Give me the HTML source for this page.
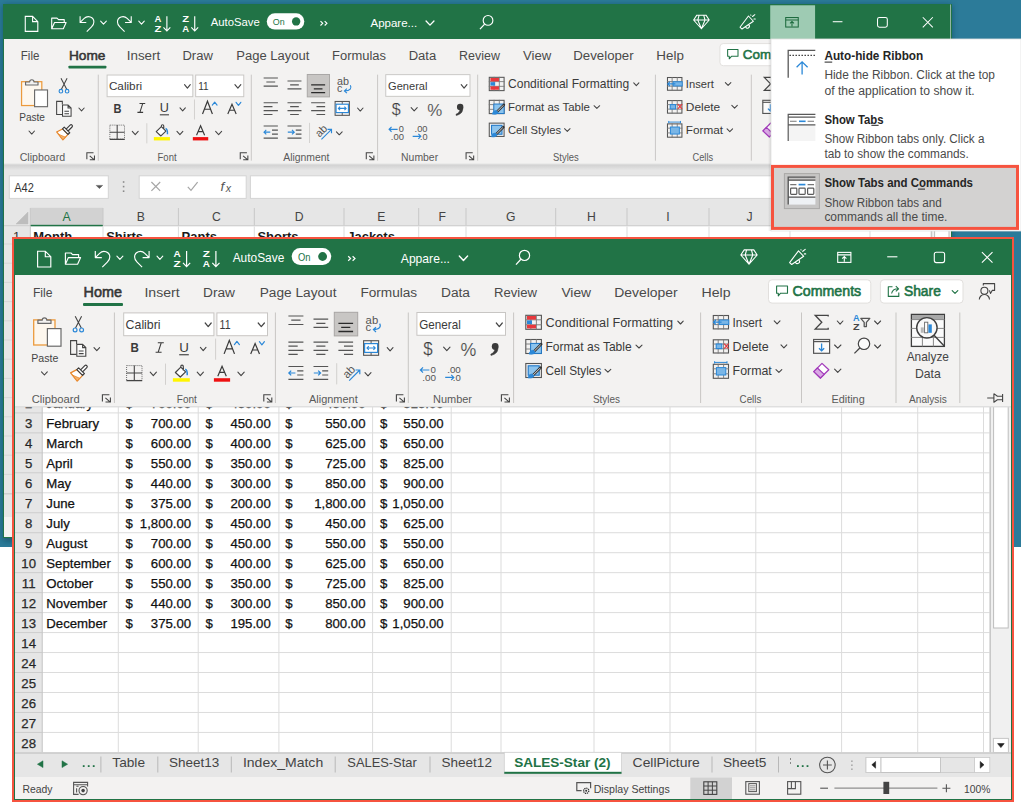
<!DOCTYPE html><html><head><meta charset="utf-8"><title>Excel</title><style>html,body{margin:0;padding:0;width:1021px;height:806px;overflow:hidden;background:#fff}svg{display:block}text{font-family:"Liberation Sans",sans-serif;white-space:pre}</style></head><body><svg width="1021" height="806" viewBox="0 0 1021 806"><defs><clipPath id="topclip"><rect x="3" y="4" width="949" height="534"/></clipPath><clipPath id="deskclip"><rect x="0" y="0" width="1021" height="547"/></clipPath><filter id="blur" x="-5%" y="-5%" width="110%" height="110%"><feGaussianBlur stdDeviation="3"/></filter><clipPath id="botclip"><rect x="15" y="239" width="996" height="560"/></clipPath><linearGradient id="menush" x1="0" y1="0" x2="1" y2="0"><stop offset="0" stop-color="#000" stop-opacity="0"/><stop offset="1" stop-color="#000" stop-opacity="0.12"/></linearGradient><linearGradient id="ribsh" x1="0" y1="0" x2="0" y2="1"><stop offset="0" stop-color="#000" stop-opacity="0.10"/><stop offset="1" stop-color="#000" stop-opacity="0"/></linearGradient></defs><rect x="0.00" y="0.00" width="1021.00" height="547.00" fill="#2c7b99"/><g clip-path="url(#deskclip)"><rect x="3" y="5" width="949" height="536" fill="#0b3a4e" opacity="0.55" filter="url(#blur)"/></g><g clip-path="url(#topclip)"><rect x="3.00" y="4.00" width="949.00" height="534.00" fill="#e6e6e6"/><rect x="3.00" y="164.50" width="949.00" height="374.00" fill="#e6e6e6"/><rect x="3.00" y="164.30" width="949.00" height="6.00" fill="url(#ribsh)"/><rect x="9.30" y="175.80" width="99.00" height="22.60" fill="#ffffff" stroke="#d4d4d4" stroke-width="1"/><text x="14.20" y="191.80" font-size="12.2" fill="#333" textLength="19.60" lengthAdjust="spacingAndGlyphs">A42</text><path d="M96.2,185.4 H102.6 L99.4,188.6 Z" stroke="#555" stroke-width="0.5" fill="#555"/><rect x="122.80" y="181.20" width="1.60" height="1.60" fill="#8a8a8a"/><rect x="122.80" y="185.80" width="1.60" height="1.60" fill="#8a8a8a"/><rect x="122.80" y="190.40" width="1.60" height="1.60" fill="#8a8a8a"/><rect x="139.20" y="175.80" width="107.00" height="22.60" fill="#ffffff" stroke="#d4d4d4" stroke-width="1"/><path d="M151.4,182 L160.2,190.8 M160.2,182 L151.4,190.8" stroke="#a6a6a6" stroke-width="1.2" fill="none"/><path d="M187.8,186.8 L191,190.4 L197.6,182.2" stroke="#a6a6a6" stroke-width="1.2" fill="none"/><text x="220.60" y="191.40" font-size="13.6" fill="#555" font-style="italic" font-family="Liberation Serif">f</text><text x="225.80" y="192.20" font-size="10.6" fill="#555" font-style="italic" font-family="Liberation Serif">x</text><rect x="250.40" y="175.80" width="700.00" height="22.60" fill="#ffffff" stroke="#d4d4d4" stroke-width="1"/><rect x="3.00" y="207.80" width="949.00" height="18.40" fill="#e6e6e6"/><path d="M28,212 V224 H16 Z" stroke="#bdbdbd" stroke-width="0.5" fill="#bdbdbd"/><rect x="30.30" y="207.80" width="72.70" height="18.20" fill="#d2d2d2"/><rect x="30.30" y="224.80" width="72.70" height="2.00" fill="#217346"/><rect x="103.00" y="225.40" width="849.00" height="1.00" fill="#c6c6c6"/><rect x="3.00" y="225.40" width="27.30" height="1.00" fill="#c6c6c6"/><rect x="29.80" y="208.00" width="1.00" height="17.40" fill="#c8c8c8"/><rect x="102.50" y="208.00" width="1.00" height="17.40" fill="#c8c8c8"/><rect x="177.90" y="208.00" width="1.00" height="17.40" fill="#c8c8c8"/><rect x="253.80" y="208.00" width="1.00" height="17.40" fill="#c8c8c8"/><rect x="343.50" y="208.00" width="1.00" height="17.40" fill="#c8c8c8"/><rect x="418.20" y="208.00" width="1.00" height="17.40" fill="#c8c8c8"/><rect x="465.50" y="208.00" width="1.00" height="17.40" fill="#c8c8c8"/><rect x="555.20" y="208.00" width="1.00" height="17.40" fill="#c8c8c8"/><rect x="626.50" y="208.00" width="1.00" height="17.40" fill="#c8c8c8"/><rect x="708.50" y="208.00" width="1.00" height="17.40" fill="#c8c8c8"/><rect x="789.50" y="208.00" width="1.00" height="17.40" fill="#c8c8c8"/><rect x="869.50" y="208.00" width="1.00" height="17.40" fill="#c8c8c8"/><rect x="930.50" y="208.00" width="1.00" height="17.40" fill="#c8c8c8"/><text x="66.65" y="221.20" font-size="12.2" fill="#217346" text-anchor="middle">A</text><text x="140.70" y="221.20" font-size="12.2" fill="#444" text-anchor="middle">B</text><text x="216.35" y="221.20" font-size="12.2" fill="#444" text-anchor="middle">C</text><text x="299.15" y="221.20" font-size="12.2" fill="#444" text-anchor="middle">D</text><text x="381.35" y="221.20" font-size="12.2" fill="#444" text-anchor="middle">E</text><text x="442.35" y="221.20" font-size="12.2" fill="#444" text-anchor="middle">F</text><text x="510.85" y="221.20" font-size="12.2" fill="#444" text-anchor="middle">G</text><text x="591.35" y="221.20" font-size="12.2" fill="#444" text-anchor="middle">H</text><text x="668.00" y="221.20" font-size="12.2" fill="#444" text-anchor="middle">I</text><text x="749.50" y="221.20" font-size="12.2" fill="#444" text-anchor="middle">J</text><text x="830.00" y="221.20" font-size="12.2" fill="#444" text-anchor="middle">K</text><text x="900.50" y="221.20" font-size="12.2" fill="#444" text-anchor="middle">L</text><rect x="30.30" y="226.40" width="921.70" height="312.00" fill="#ffffff"/><rect x="3.00" y="226.40" width="27.30" height="268.00" fill="#e6e6e6"/><rect x="102.50" y="226.40" width="1.00" height="268.00" fill="#dcdcdc"/><rect x="177.90" y="226.40" width="1.00" height="268.00" fill="#dcdcdc"/><rect x="253.80" y="226.40" width="1.00" height="268.00" fill="#dcdcdc"/><rect x="343.50" y="226.40" width="1.00" height="268.00" fill="#dcdcdc"/><rect x="418.20" y="226.40" width="1.00" height="268.00" fill="#dcdcdc"/><rect x="465.50" y="226.40" width="1.00" height="268.00" fill="#dcdcdc"/><rect x="555.20" y="226.40" width="1.00" height="268.00" fill="#dcdcdc"/><rect x="626.50" y="226.40" width="1.00" height="268.00" fill="#dcdcdc"/><rect x="708.50" y="226.40" width="1.00" height="268.00" fill="#dcdcdc"/><rect x="789.50" y="226.40" width="1.00" height="268.00" fill="#dcdcdc"/><rect x="869.50" y="226.40" width="1.00" height="268.00" fill="#dcdcdc"/><rect x="930.50" y="226.40" width="1.00" height="268.00" fill="#dcdcdc"/><rect x="29.80" y="226.40" width="1.00" height="268.00" fill="#c6c6c6"/><rect x="3.00" y="243.50" width="949.00" height="1.00" fill="#d6d6d6"/><rect x="3.00" y="262.70" width="949.00" height="1.00" fill="#d6d6d6"/><rect x="3.00" y="281.90" width="949.00" height="1.00" fill="#d6d6d6"/><rect x="3.00" y="301.10" width="949.00" height="1.00" fill="#d6d6d6"/><rect x="3.00" y="320.30" width="949.00" height="1.00" fill="#d6d6d6"/><rect x="3.00" y="339.50" width="949.00" height="1.00" fill="#d6d6d6"/><rect x="3.00" y="358.70" width="949.00" height="1.00" fill="#d6d6d6"/><rect x="3.00" y="377.90" width="949.00" height="1.00" fill="#d6d6d6"/><rect x="3.00" y="397.10" width="949.00" height="1.00" fill="#d6d6d6"/><rect x="3.00" y="416.30" width="949.00" height="1.00" fill="#d6d6d6"/><rect x="3.00" y="435.50" width="949.00" height="1.00" fill="#d6d6d6"/><rect x="3.00" y="454.70" width="949.00" height="1.00" fill="#d6d6d6"/><rect x="3.00" y="473.90" width="949.00" height="1.00" fill="#d6d6d6"/><rect x="3.00" y="493.10" width="949.00" height="1.00" fill="#d6d6d6"/><rect x="931.00" y="226.40" width="21.00" height="268.00" fill="#f0f0f0"/><rect x="931.00" y="226.40" width="1.20" height="268.00" fill="#c8c8c8"/><rect x="934.60" y="229.00" width="14.40" height="100.00" fill="#ffffff" stroke="#bcbcbc" stroke-width="1"/><text x="16.50" y="241.20" font-size="12.8" fill="#333" text-anchor="middle">1</text><text x="33.20" y="241.40" font-size="13" fill="#1a1a1a" font-weight="bold">Month</text><text x="106.20" y="241.40" font-size="13" fill="#1a1a1a" font-weight="bold">Shirts</text><text x="181.60" y="241.40" font-size="13" fill="#1a1a1a" font-weight="bold">Pants</text><text x="257.40" y="241.40" font-size="13" fill="#1a1a1a" font-weight="bold">Shorts</text><text x="347.20" y="241.40" font-size="13" fill="#1a1a1a" font-weight="bold">Jackets</text><rect x="3.00" y="494.00" width="949.00" height="23.00" fill="#e6e6e6"/><rect x="3.00" y="493.40" width="949.00" height="1.00" fill="#c8c8c8"/><rect x="3.00" y="517.00" width="949.00" height="21.00" fill="#f3f2f1"/><g transform="translate(-10.4664,-222.3528) scale(0.950430)"><rect x="15.00" y="237.00" width="996.00" height="38.00" fill="#217346"/><rect x="15.00" y="275.00" width="996.00" height="132.00" fill="#f3f2f1"/><rect x="821.40" y="239.50" width="47.20" height="35.70" fill="#9ecbb3"/><path d="M37.6,251.2 H45.3 L50.8,256.7 V267 H37.6 Z M45.3,251.2 V256.7 H50.8" stroke="white" stroke-width="1.15" fill="none"/><path d="M65.4,264.2 V253 H71 L72.6,254.6 H78.6 V257.6 M65.4,264.2 L68.4,257.6 H80.6 L77.6,264.2 Z" stroke="white" stroke-width="1.15" fill="none" stroke-linejoin="round"/><path d="M95.3,251 V257.6 H101.8 M95.6,257.3 L99.6,253.3 C103.2,249.7 109.8,251.6 109.8,257 C109.8,259.4 108.7,260.8 107.3,262.2 L102.3,267.2" stroke="white" stroke-width="1.15" fill="none" stroke-linejoin="round"/><path d="M116.9,256.2 L119.9,259.4 L122.9,256.2" stroke="white" stroke-width="1.1" fill="none" stroke-linecap="round" stroke-linejoin="round"/><g transform="translate(244.4,0) scale(-1,1)"><path d="M95.3,251 V257.6 H101.8 M95.6,257.3 L99.6,253.3 C103.2,249.7 109.8,251.6 109.8,257 C109.8,259.4 108.7,260.8 107.3,262.2 L102.3,267.2" stroke="white" stroke-width="1.15" fill="none" stroke-linejoin="round"/></g><path d="M157,256.2 L159.9,259.4 L162.8,256.2" stroke="white" stroke-width="1.1" fill="none" stroke-linecap="round" stroke-linejoin="round"/><text x="173.60" y="257.30" font-size="8.6" fill="white" font-weight="bold" textLength="7.20" lengthAdjust="spacingAndGlyphs">A</text><text x="173.60" y="267.30" font-size="8.6" fill="white" font-weight="bold" textLength="7.20" lengthAdjust="spacingAndGlyphs">Z</text><path d="M186.6,251 V266.6 M183.0,262.8 L186.6,266.6 L190.2,262.8" stroke="white" stroke-width="1.2" fill="none"/><text x="202.80" y="257.30" font-size="8.6" fill="white" font-weight="bold" textLength="7.20" lengthAdjust="spacingAndGlyphs">Z</text><text x="202.80" y="267.30" font-size="8.6" fill="white" font-weight="bold" textLength="7.20" lengthAdjust="spacingAndGlyphs">A</text><path d="M215.9,251 V266.6 M212.3,262.8 L215.9,266.6 L219.5,262.8" stroke="white" stroke-width="1.2" fill="none"/><text x="232.70" y="261.60" font-size="12" fill="white" textLength="51.60" lengthAdjust="spacingAndGlyphs">AutoSave</text><rect x="291.70" y="248.00" width="39.50" height="17.00" fill="white" rx="8.5"/><text x="298.00" y="260.60" font-size="10" fill="#217346" textLength="12.50" lengthAdjust="spacingAndGlyphs">On</text><circle cx="322.6" cy="256.5" r="4.4" fill="#217346"/><path d="M348.2,256.2 L350.6,258.5 L348.2,260.8 M352.6,256.2 L355,258.5 L352.6,260.8" stroke="white" stroke-width="1.2" fill="none"/><text x="400.80" y="262.50" font-size="12.2" fill="white" textLength="49.20" lengthAdjust="spacingAndGlyphs">Appare...</text><path d="M459.3,256 L463.45000000000005,260.4 L467.6,256" stroke="white" stroke-width="1.4" fill="none" stroke-linecap="round" stroke-linejoin="round"/><circle cx="524.5" cy="255.4" r="5.1" stroke="white" stroke-width="1.2" fill="none"/><path d="M516,264.6 L520.9,259.3" stroke="white" stroke-width="1.3" fill="none"/><path d="M744.2,249.9 H753.8 L757.2,255 L749,264.2 L740.8,255 Z M740.8,255 H757.2 M746.6,249.9 L745.2,255 L749,264.2 L752.8,255 L751.4,249.9" stroke="white" stroke-width="1.1" fill="none" stroke-linejoin="round"/><path d="M798.5,250.8 L803.7,256.3 L791.7,264.5 L789.6,262.6 Z M795.6,262.4 A2,2 0 0 0 799.3,260.6 M800.9,249.8 L801.1,249.9 M802.8,251.3 L805.2,249.4 M804.3,253.9 L805.7,253.9" stroke="white" stroke-width="1.1" fill="none" stroke-linejoin="round" stroke-linecap="round"/><rect x="837.70" y="252.40" width="13.20" height="10.00" fill="none" stroke="#1e6b3f" stroke-width="1.1"/><path d="M837.7,254.9 H850.9 M844.3,261.8 V256.6 M842.2,258.6 L844.3,256.5 L846.4,258.6" stroke="#1e6b3f" stroke-width="1.1" fill="none"/><path d="M887.2,256.8 H897.4" stroke="white" stroke-width="1.1" fill="none"/><rect x="934.30" y="252.30" width="10.30" height="10.30" fill="none" stroke="white" stroke-width="1.1" rx="2"/><path d="M981.9,252.1 L992.5,262.7 M992.5,252.1 L981.9,262.7" stroke="white" stroke-width="1.1" fill="none"/><text x="32.90" y="297.10" font-size="13.7" fill="#4a4a4a" textLength="19.60" lengthAdjust="spacingAndGlyphs">File</text><text x="144.40" y="297.10" font-size="13.7" fill="#4a4a4a" textLength="35.20" lengthAdjust="spacingAndGlyphs">Insert</text><text x="203.00" y="297.10" font-size="13.7" fill="#4a4a4a" textLength="32.00" lengthAdjust="spacingAndGlyphs">Draw</text><text x="259.70" y="297.10" font-size="13.7" fill="#4a4a4a" textLength="76.80" lengthAdjust="spacingAndGlyphs">Page Layout</text><text x="360.40" y="297.10" font-size="13.7" fill="#4a4a4a" textLength="56.80" lengthAdjust="spacingAndGlyphs">Formulas</text><text x="441.00" y="297.10" font-size="13.7" fill="#4a4a4a" textLength="29.00" lengthAdjust="spacingAndGlyphs">Data</text><text x="494.00" y="297.10" font-size="13.7" fill="#4a4a4a" textLength="43.00" lengthAdjust="spacingAndGlyphs">Review</text><text x="561.40" y="297.10" font-size="13.7" fill="#4a4a4a" textLength="29.70" lengthAdjust="spacingAndGlyphs">View</text><text x="614.20" y="297.10" font-size="13.7" fill="#4a4a4a" textLength="63.50" lengthAdjust="spacingAndGlyphs">Developer</text><text x="701.60" y="297.10" font-size="13.7" fill="#4a4a4a" textLength="29.00" lengthAdjust="spacingAndGlyphs">Help</text><text x="83.60" y="297.10" font-size="14" fill="#3a3a3a" textLength="38.40" lengthAdjust="spacingAndGlyphs" stroke="#323130" stroke-width="0.55">Home</text><rect x="83.00" y="303.00" width="40.00" height="3.00" fill="#217346" rx="1"/><rect x="768.50" y="279.80" width="102.30" height="23.30" fill="white" stroke="#e1dfdd" stroke-width="1" rx="3.5"/><path d="M776.6,286 H787.5 V293.2 H780.6 L778.3,295.8 V293.2 H776.6 Z" stroke="#217346" stroke-width="1.1" fill="none" stroke-linejoin="round"/><text x="792.60" y="296.30" font-size="14" fill="#217346" textLength="68.60" lengthAdjust="spacingAndGlyphs" stroke="#217346" stroke-width="0.6">Comments</text><rect x="880.40" y="279.80" width="82.60" height="23.30" fill="white" stroke="#e1dfdd" stroke-width="1" rx="3.5"/><path d="M892.5,286.8 H888.3 V296.4 H898.8 V292.5 M891.6,293.5 C892.2,290 894.6,288.8 898.4,288.8 M895.8,286.2 L898.6,288.8 L895.8,291.4" stroke="#217346" stroke-width="1.1" fill="none" stroke-linejoin="round"/><text x="904.00" y="296.10" font-size="14" fill="#217346" textLength="36.80" lengthAdjust="spacingAndGlyphs" stroke="#217346" stroke-width="0.6">Share</text><path d="M952.2,290.6 L955.0,293.4 L957.8,290.6" stroke="#217346" stroke-width="1.2" fill="none" stroke-linecap="round" stroke-linejoin="round"/><path d="M983.3,285.6 V283.6 H994.6 V290.4 H992.2 L990.5,293.4 L989.4,290.4" stroke="#444444" stroke-width="1.1" fill="none" stroke-linejoin="round"/><circle cx="984.4" cy="290.7" r="3.5" stroke="#444444" stroke-width="1.1" fill="none"/><path d="M979.3,299.6 A5.1,5.1 0 0 1 989.5,299.6" stroke="#444444" stroke-width="1.1" fill="none"/><rect x="113.90" y="312.50" width="1.00" height="90.50" fill="#c8c6c4"/><rect x="274.90" y="312.50" width="1.00" height="90.50" fill="#c8c6c4"/><rect x="407.80" y="312.50" width="1.00" height="90.50" fill="#c8c6c4"/><rect x="513.10" y="312.50" width="1.00" height="90.50" fill="#c8c6c4"/><rect x="700.10" y="312.50" width="1.00" height="90.50" fill="#c8c6c4"/><rect x="801.00" y="312.50" width="1.00" height="90.50" fill="#c8c6c4"/><rect x="895.50" y="312.50" width="1.00" height="90.50" fill="#c8c6c4"/><rect x="959.30" y="312.50" width="1.00" height="90.50" fill="#c8c6c4"/><rect x="215.10" y="338.60" width="1.00" height="21.10" fill="#d2d0ce"/><rect x="165.00" y="363.60" width="1.00" height="21.20" fill="#d2d0ce"/><rect x="336.20" y="363.20" width="1.00" height="21.20" fill="#d2d0ce"/><text x="31.70" y="402.90" font-size="11" fill="#5a5a5a" textLength="48.00" lengthAdjust="spacingAndGlyphs">Clipboard</text><text x="176.80" y="402.90" font-size="11" fill="#5a5a5a" textLength="20.00" lengthAdjust="spacingAndGlyphs">Font</text><text x="309.00" y="402.90" font-size="11" fill="#5a5a5a" textLength="48.70" lengthAdjust="spacingAndGlyphs">Alignment</text><text x="433.00" y="402.90" font-size="11" fill="#5a5a5a" textLength="39.00" lengthAdjust="spacingAndGlyphs">Number</text><text x="592.90" y="402.90" font-size="11" fill="#5a5a5a" textLength="27.10" lengthAdjust="spacingAndGlyphs">Styles</text><text x="739.60" y="402.90" font-size="11" fill="#5a5a5a" textLength="21.70" lengthAdjust="spacingAndGlyphs">Cells</text><text x="831.50" y="402.90" font-size="11" fill="#5a5a5a" textLength="33.20" lengthAdjust="spacingAndGlyphs">Editing</text><text x="909.00" y="402.90" font-size="11" fill="#5a5a5a" textLength="37.70" lengthAdjust="spacingAndGlyphs">Analysis</text><path d="M102.4,401.6 V394.7 H109.4" stroke="#444444" stroke-width="1.1" fill="none"/><path d="M105.4,397.9 L110.0,401.9 M105.5,402 H110.4 V397.6" stroke="#444444" stroke-width="1.1" fill="none"/><path d="M263.8,401.6 V394.7 H270.8" stroke="#444444" stroke-width="1.1" fill="none"/><path d="M266.8,397.9 L271.40000000000003,401.9 M266.90000000000003,402 H271.8 V397.6" stroke="#444444" stroke-width="1.1" fill="none"/><path d="M396.4,401.6 V394.7 H403.4" stroke="#444444" stroke-width="1.1" fill="none"/><path d="M399.4,397.9 L404.0,401.9 M399.5,402 H404.4 V397.6" stroke="#444444" stroke-width="1.1" fill="none"/><path d="M501.4,401.6 V394.7 H508.4" stroke="#444444" stroke-width="1.1" fill="none"/><path d="M504.4,397.9 L509.0,401.9 M504.5,402 H509.4 V397.6" stroke="#444444" stroke-width="1.1" fill="none"/><rect x="33.70" y="319.90" width="21.30" height="25.10" fill="#fdf7ee" stroke="#ec9a3c" stroke-width="1.3"/><path d="M37.9,323.4 V320.2 H42.2 A2.3,2.3 0 0 1 46.8,320.2 H51 V323.4 Z" stroke="#6a6a6a" stroke-width="1.2" fill="#f3f2f1" stroke-linejoin="round"/><rect x="47.40" y="328.60" width="13.60" height="17.60" fill="#ffffff" stroke="#6a6a6a" stroke-width="1.2"/><text x="31.20" y="361.60" font-size="11" fill="#454545" textLength="27.10" lengthAdjust="spacingAndGlyphs">Paste</text><path d="M41.5,371.8 L44.4,375 L47.3,371.8" stroke="#444444" stroke-width="1.1" fill="none" stroke-linecap="round" stroke-linejoin="round"/><path d="M75.2,316.2 L81.3,328 M81.6,316.2 L75.5,328" stroke="#444444" stroke-width="1.1" fill="none"/><circle cx="75.1" cy="329.9" r="1.9" stroke="#2b88d8" stroke-width="1.2" fill="none"/><circle cx="81.6" cy="329.9" r="1.9" stroke="#2b88d8" stroke-width="1.2" fill="none"/><path d="M76.6,344 V340.6 H70.6 V354.4 H76.6" stroke="#444444" stroke-width="1.1" fill="none"/><path d="M76.8,344.4 H82.6 L85.8,347.6 V356.2 H76.8 Z M82.6,344.4 V347.6 H85.8 M78.8,351 H83.6 M78.8,353.6 H83.6" stroke="#444444" stroke-width="1.1" fill="#fbfbfb"/><path d="M94,347.6 L96.8,350.6 L99.6,347.6" stroke="#444444" stroke-width="1.1" fill="none" stroke-linecap="round" stroke-linejoin="round"/><path d="M76.8,369.6 L70.6,372.8 L77.2,381 L82.6,375.4 Z" stroke="#e8872a" stroke-width="1.3" fill="#ffffff" stroke-linejoin="round"/><path d="M72.6,375.2 L79.6,378.2 L77.2,381 Z" stroke="#e8872a" stroke-width="0.8" fill="#f3b36e" stroke-linejoin="round"/><path d="M76.8,369.6 L78.6,367.8 L84.4,373.6 L82.6,375.4 Z M80.6,369.8 L84.8,365.6 A1.4,1.4 0 0 1 86.8,367.6 L82.6,371.8" stroke="#3a3a3a" stroke-width="1.2" fill="#ffffff" stroke-linejoin="round"/><rect x="123.70" y="312.90" width="90.20" height="22.80" fill="white" stroke="#c8c6c4" stroke-width="1"/><text x="125.60" y="328.80" font-size="12.2" fill="#3a3a3a" textLength="35.00" lengthAdjust="spacingAndGlyphs">Calibri</text><path d="M205.2,323 L208.2,326.6 L211.2,323" stroke="#444444" stroke-width="1.2" fill="none" stroke-linecap="round" stroke-linejoin="round"/><rect x="216.90" y="312.90" width="50.60" height="22.80" fill="white" stroke="#c8c6c4" stroke-width="1"/><text x="219.60" y="328.80" font-size="12.2" fill="#3a3a3a" textLength="11.00" lengthAdjust="spacingAndGlyphs">11</text><path d="M258.2,323 L261.29999999999995,326.6 L264.4,323" stroke="#444444" stroke-width="1.2" fill="none" stroke-linecap="round" stroke-linejoin="round"/><text x="130.40" y="352.40" font-size="13.6" fill="#3a3a3a" font-weight="bold" textLength="8.40" lengthAdjust="spacingAndGlyphs">B</text><path d="M157.8,342.8 H163.8 M155.6,352.2 H161.6 M161.2,342.8 L158.2,352.2" stroke="#3a3a3a" stroke-width="1.1" fill="none"/><text x="179.20" y="352.20" font-size="13" fill="#3a3a3a" textLength="9.60" lengthAdjust="spacingAndGlyphs">U</text><rect x="179.20" y="354.20" width="9.60" height="1.10" fill="#3a3a3a"/><path d="M200.4,347.4 L203.2,350.6 L206,347.4" stroke="#444444" stroke-width="1.1" fill="none" stroke-linecap="round" stroke-linejoin="round"/><path d="M224.1,353.9 L229.3,340.4 L234.5,353.9 M226.1,348.9 H232.5" stroke="#3a3a3a" stroke-width="1.25" fill="none"/><path d="M234.4,344.6 L236.9,341.4 L239.4,344.6" stroke="#2b88d8" stroke-width="1.2" fill="none" stroke-linecap="round" stroke-linejoin="round"/><path d="M250.7,353.9 L255.1,343.6 L259.5,353.9 M252.4,350 H257.8" stroke="#3a3a3a" stroke-width="1.2" fill="none"/><path d="M259.4,341.6 L261.9,344.8 L264.4,341.6" stroke="#2b88d8" stroke-width="1.2" fill="none" stroke-linecap="round" stroke-linejoin="round"/><path d="M126.6,365.6 H142 V380.4 H126.6 Z" stroke="#6a6a6a" stroke-width="1" fill="none" stroke-dasharray="1,1"/><path d="M134.3,365.6 V380.4 M126.6,373 H142 M126.4,380.6 H142.2" stroke="#444444" stroke-width="1.1" fill="none"/><path d="M150.2,372.2 L153.3,375.6 L156.4,372.2" stroke="#444444" stroke-width="1.1" fill="none" stroke-linecap="round" stroke-linejoin="round"/><path d="M175.4,372.5 L180.8,367.1 L185.6,371.9 L180.3,377 Z M180.8,367.1 V366.4 A1.25,1.25 0 0 1 183.3,366.4 V370.6" stroke="#444444" stroke-width="1.2" fill="white" stroke-linejoin="round"/><path d="M185.2,369.2 C186.8,369.6 187.4,371.4 187.2,375.2" stroke="#2b88d8" stroke-width="1.5" fill="none"/><rect x="172.90" y="378.20" width="16.90" height="3.50" fill="#fff500"/><path d="M197.2,372.2 L200.3,375.6 L203.4,372.2" stroke="#444444" stroke-width="1.1" fill="none" stroke-linecap="round" stroke-linejoin="round"/><path d="M217.8,376.2 L222.05,366.2 L226.3,376.2 M219.4,372.4 H224.7" stroke="#3a3a3a" stroke-width="1.2" fill="none"/><rect x="213.90" y="378.20" width="16.20" height="3.50" fill="#ee1111"/><path d="M237.9,372.2 L241.05,375.6 L244.2,372.2" stroke="#444444" stroke-width="1.1" fill="none" stroke-linecap="round" stroke-linejoin="round"/><path d="M288.40,316 H303.40 M291.25,320.2 H300.55 M288.40,324.5 H303.40" stroke="#555" stroke-width="1.2" fill="none"/><path d="M313.50,319.2 H328.20 M316.29,323.3 H325.41 M313.50,327.4 H328.20" stroke="#555" stroke-width="1.2" fill="none"/><rect x="334.30" y="312.30" width="23.40" height="23.60" fill="#c8c6c4" stroke="#a8a6a4" stroke-width="1"/><path d="M338.40,323.3 H353.10 M341.19,327.4 H350.31 M338.40,331.5 H353.10" stroke="#2a2a2a" stroke-width="1.3" fill="none"/><text x="365.60" y="323.60" font-size="11" fill="#555" textLength="12.60" lengthAdjust="spacingAndGlyphs">ab</text><text x="365.60" y="331.00" font-size="11" fill="#555" textLength="5.60" lengthAdjust="spacingAndGlyphs">c</text><path d="M379.6,323.6 C381.4,326.6 379.6,329.6 373.6,329.6 M376,327.2 L373.4,329.6 L376,332" stroke="#2b88d8" stroke-width="1.2" fill="none"/><path d="M288.40,342.1 H303.40 M288.40,346.2 H297.70 M288.40,350.3 H303.40 M288.40,354.4 H297.70" stroke="#555" stroke-width="1.2" fill="none"/><path d="M313.50,342.1 H328.20 M316.29,346.2 H325.41 M313.50,350.3 H328.20 M316.29,354.4 H325.41" stroke="#555" stroke-width="1.2" fill="none"/><path d="M338.40,342.1 H353.10 M343.99,346.2 H353.10 M338.40,350.3 H353.10 M343.99,354.4 H353.10" stroke="#555" stroke-width="1.2" fill="none"/><rect x="363.60" y="340.70" width="15.00" height="14.60" fill="none" stroke="#555" stroke-width="1.1"/><rect x="364.60" y="343.60" width="13.00" height="8.80" fill="#ffffff" stroke="#2b88d8" stroke-width="1.2"/><path d="M367,348 H375.2 M368.8,346.2 L367,348 L368.8,349.8 M373.4,346.2 L375.2,348 L373.4,349.8" stroke="#2b88d8" stroke-width="1.1" fill="none"/><path d="M371.1,340.7 V343.2 M371.1,352.8 V355.3" stroke="#555" stroke-width="1" fill="none"/><path d="M387.2,347.6 L390.1,350.8 L393,347.6" stroke="#444444" stroke-width="1.1" fill="none" stroke-linecap="round" stroke-linejoin="round"/><path d="M288.4,366.5 H303.4 M297.2,370.9 H303.4 M297.2,375 H303.4 M288.4,379.3 H303.4" stroke="#555" stroke-width="1.2" fill="none"/><path d="M288.8,373 H295.4 M291.2,370.6 L288.8,373 L291.2,375.4" stroke="#2b88d8" stroke-width="1.2" fill="none"/><path d="M313.5,366.5 H328.2 M322.2,370.9 H328.2 M322.2,375 H328.2 M313.5,379.3 H328.2" stroke="#555" stroke-width="1.2" fill="none"/><path d="M313.8,373 H320.6 M318.2,370.6 L320.6,373 L318.2,375.4" stroke="#2b88d8" stroke-width="1.2" fill="none"/><text x="341.60" y="376.40" font-size="11.5" fill="#555" textLength="12.60" lengthAdjust="spacingAndGlyphs" transform="rotate(-45 347.5 371)">ab</text><path d="M349.2,380.6 L359.8,370 M355.6,370 H359.8 V374.2" stroke="#2b88d8" stroke-width="1.2" fill="none"/><path d="M365,372.6 L368.0,375.8 L371,372.6" stroke="#444444" stroke-width="1.1" fill="none" stroke-linecap="round" stroke-linejoin="round"/><rect x="416.90" y="312.50" width="88.60" height="22.80" fill="white" stroke="#c8c6c4" stroke-width="1"/><text x="419.30" y="328.50" font-size="11.9" fill="#3a3a3a" textLength="41.50" lengthAdjust="spacingAndGlyphs">General</text><path d="M496.3,323 L499.3,326.6 L502.3,323" stroke="#444444" stroke-width="1.2" fill="none" stroke-linecap="round" stroke-linejoin="round"/><text x="423.20" y="355.20" font-size="17.5" fill="#3a3a3a" textLength="9.40" lengthAdjust="spacingAndGlyphs" stroke="#f3f2f1" stroke-width="0.2">$</text><path d="M443.6,347.2 L446.8,350.6 L450,347.2" stroke="#444444" stroke-width="1.1" fill="none" stroke-linecap="round" stroke-linejoin="round"/><text x="460.60" y="356.40" font-size="17.5" fill="#3a3a3a" textLength="15.80" lengthAdjust="spacingAndGlyphs" stroke="#f3f2f1" stroke-width="0.2">%</text><circle cx="495.2" cy="346.4" r="3.4" fill="#3a3a3a"/><path d="M497.6,347 C498.6,351.4 496,354.2 491,355.4 L490.8,354.2 C493.6,353 495,351.2 494.8,348.6 Z" stroke="#3a3a3a" stroke-width="0.6" fill="#3a3a3a"/><text x="430.50" y="372.50" font-size="8.6" fill="#555" textLength="5.40" lengthAdjust="spacingAndGlyphs">0</text><text x="422.20" y="380.90" font-size="8.6" fill="#555" textLength="13.80" lengthAdjust="spacingAndGlyphs">.00</text><path d="M420.4,370 H429.4 M423,367.4 L420.4,370 L423,372.6" stroke="#2b88d8" stroke-width="1.2" fill="none"/><text x="447.20" y="372.50" font-size="8.6" fill="#555" textLength="13.60" lengthAdjust="spacingAndGlyphs">.00</text><text x="452.80" y="380.90" font-size="8.6" fill="#555" textLength="8.00" lengthAdjust="spacingAndGlyphs">.0</text><path d="M445.2,377.4 H453.8 M451.2,374.8 L453.8,377.4 L451.2,380" stroke="#2b88d8" stroke-width="1.2" fill="none"/><rect x="525.80" y="315.30" width="15.60" height="14.00" fill="none" stroke="#555" stroke-width="1.1"/><path d="M530.83,314.8 V329.8 M536.37,314.8 V329.8 M525.3,319.80 H541.9 M525.3,324.80 H541.9" stroke="#777" stroke-width="0.9" fill="none"/><rect x="527.00" y="316.00" width="9.00" height="3.60" fill="#e8383d"/><rect x="527.00" y="320.40" width="5.00" height="3.60" fill="#2b88d8"/><rect x="527.00" y="324.80" width="9.00" height="3.60" fill="#e8383d"/><text x="545.50" y="326.90" font-size="12.5" fill="#3a3a3a" textLength="127.60" lengthAdjust="spacingAndGlyphs">Conditional Formatting</text><path d="M677.8,321.2 L680.5,324 L683.2,321.2" stroke="#444444" stroke-width="1.1" fill="none" stroke-linecap="round" stroke-linejoin="round"/><rect x="525.80" y="339.50" width="15.60" height="14.00" fill="none" stroke="#555" stroke-width="1.1"/><path d="M530.83,339 V354 M536.37,339 V354 M525.3,344.00 H541.9 M525.3,349.00 H541.9" stroke="#777" stroke-width="0.9" fill="none"/><rect x="530.60" y="343.40" width="10.80" height="10.00" fill="#8cc4ee" stroke="#1f78c8" stroke-width="1"/><path d="M533.6,351.8 L541.2,344.2" stroke="#333" stroke-width="2.6" fill="none" stroke-linecap="round"/><path d="M534.2,351.2 L540.6,344.8" stroke="#ffffff" stroke-width="0.8" fill="none"/><path d="M529,354 C529.6,351.6 531,350.4 533.2,350.2 L535,352 C534.6,354 532.4,354.4 529,354 Z" stroke="#2b88d8" stroke-width="0.8" fill="#2b88d8"/><text x="545.50" y="351.10" font-size="12.2" fill="#3a3a3a" textLength="86.20" lengthAdjust="spacingAndGlyphs">Format as Table</text><path d="M636,345.2 L639.0,348 L642,345.2" stroke="#444444" stroke-width="1.1" fill="none" stroke-linecap="round" stroke-linejoin="round"/><rect x="525.80" y="363.50" width="15.60" height="14.00" fill="none" stroke="#555" stroke-width="1.1"/><rect x="528.20" y="365.80" width="11.00" height="9.40" fill="#8cc4ee" stroke="#1f78c8" stroke-width="1.1"/><path d="M532.6,375.6 L540.6,367.6" stroke="#333" stroke-width="2.6" fill="none" stroke-linecap="round"/><path d="M533.2,375 L540,368.2" stroke="#ffffff" stroke-width="0.8" fill="none"/><path d="M528,377.8 C528.6,375.4 530,374.2 532.2,374 L534,375.8 C533.6,377.8 531.4,378.2 528,377.8 Z" stroke="#2b88d8" stroke-width="0.8" fill="#2b88d8"/><text x="545.50" y="375.20" font-size="12" fill="#3a3a3a" textLength="55.80" lengthAdjust="spacingAndGlyphs">Cell Styles</text><path d="M605,369.4 L607.9,372.2 L610.8,369.4" stroke="#444444" stroke-width="1.1" fill="none" stroke-linecap="round" stroke-linejoin="round"/><rect x="713.30" y="315.50" width="15.20" height="13.40" fill="none" stroke="#555" stroke-width="1.1"/><path d="M718.20,315 V329.4 M723.60,315 V329.4 M712.8,319.80 H729.0 M712.8,324.60 H729.0" stroke="#777" stroke-width="0.9" fill="none"/><rect x="719.20" y="320.00" width="9.60" height="4.40" fill="#7ab6e6" stroke="#2b88d8" stroke-width="1"/><path d="M713.6,322.2 H721.6 M716,319.8 L713.6,322.2 L716,324.6" stroke="#2b88d8" stroke-width="1.3" fill="none"/><text x="732.60" y="326.90" font-size="12" fill="#3a3a3a" textLength="29.40" lengthAdjust="spacingAndGlyphs">Insert</text><path d="M774.2,320.8 L777.1,323.8 L780,320.8" stroke="#444444" stroke-width="1.1" fill="none" stroke-linecap="round" stroke-linejoin="round"/><rect x="713.30" y="339.80" width="15.20" height="13.20" fill="none" stroke="#555" stroke-width="1.1"/><path d="M718.20,339.3 V353.5 M723.60,339.3 V353.5 M712.8,344.03 H729.0 M712.8,348.77 H729.0" stroke="#777" stroke-width="0.9" fill="none"/><rect x="716.20" y="344.00" width="5.60" height="4.60" fill="#7ab6e6" stroke="#2b88d8" stroke-width="1.1"/><path d="M724.2,343.6 L728.6,348.6 M728.6,343.6 L724.2,348.6" stroke="#e8383d" stroke-width="1.2" fill="none"/><text x="732.60" y="350.90" font-size="12.4" fill="#3a3a3a" textLength="36.20" lengthAdjust="spacingAndGlyphs">Delete</text><path d="M781,344.8 L783.9,347.8 L786.8,344.8" stroke="#444444" stroke-width="1.1" fill="none" stroke-linecap="round" stroke-linejoin="round"/><rect x="713.30" y="364.30" width="15.20" height="14.00" fill="none" stroke="#555" stroke-width="1.1"/><path d="M718.20,363.8 V378.8 M723.60,363.8 V378.8 M712.8,368.80 H729.0 M712.8,373.80 H729.0" stroke="#777" stroke-width="0.9" fill="none"/><rect x="716.40" y="367.60" width="9.40" height="7.40" fill="#7ab6e6" stroke="#2b88d8" stroke-width="1"/><path d="M714.6,362.4 H727 M714.6,361.2 V363.6 M727,361.2 V363.6" stroke="#2b88d8" stroke-width="1" fill="none"/><text x="732.60" y="375.20" font-size="12.4" fill="#3a3a3a" textLength="39.20" lengthAdjust="spacingAndGlyphs">Format</text><path d="M776,369.6 L778.9,372.4 L781.8,369.6" stroke="#444444" stroke-width="1.1" fill="none" stroke-linecap="round" stroke-linejoin="round"/><path d="M828.2,316.6 V315.3 H815.2 L821.8,322.2 L815.2,329.1 H828.2 V327.8" stroke="#444" stroke-width="1.3" fill="none" stroke-linejoin="miter"/><path d="M837.3,321 L840.0999999999999,324.1 L842.9,321" stroke="#444444" stroke-width="1.1" fill="none" stroke-linecap="round" stroke-linejoin="round"/><text x="853.10" y="320.80" font-size="8.6" fill="#2b88d8" font-weight="bold" textLength="6.60" lengthAdjust="spacingAndGlyphs">A</text><text x="853.10" y="330.30" font-size="8.6" fill="#444" font-weight="bold" textLength="6.60" lengthAdjust="spacingAndGlyphs">Z</text><path d="M860.8,318.4 H869.8 L866.4,322.4 V326.6 H864.2 V322.4 Z" stroke="#555" stroke-width="1.3" fill="#f3f2f1" stroke-linejoin="round"/><path d="M874.6,321 L877.6,324.1 L880.6,321" stroke="#444444" stroke-width="1.1" fill="none" stroke-linecap="round" stroke-linejoin="round"/><rect x="813.60" y="339.50" width="16.00" height="13.80" fill="#fbfbfb" stroke="#555" stroke-width="1.2"/><path d="M813.6,341.6 H829.6" stroke="#555" stroke-width="1.2" fill="none"/><path d="M821.6,343.6 V350.6 M819,348.2 L821.6,350.8 L824.2,348.2" stroke="#2b88d8" stroke-width="1.3" fill="none"/><path d="M834.6,345 L837.75,348.2 L840.9,345" stroke="#444444" stroke-width="1.1" fill="none" stroke-linecap="round" stroke-linejoin="round"/><circle cx="864" cy="343.8" r="5.7" stroke="#444" stroke-width="1.2" fill="#fbfbfb"/><path d="M854.4,353.4 L860.1,347.8" stroke="#444" stroke-width="1.3" fill="none"/><path d="M874.6,345 L877.6,348.2 L880.6,345" stroke="#444444" stroke-width="1.1" fill="none" stroke-linecap="round" stroke-linejoin="round"/><path d="M813.8,371.6 L822,363.4 L828.8,369.8 L820.4,378 Z" stroke="#a23bba" stroke-width="1.3" fill="#ffffff" stroke-linejoin="round"/><path d="M813.8,371.6 L817.4,368 L824.2,374.4 L820.4,378 Z" stroke="#a23bba" stroke-width="1.2" fill="#d9a8e4" stroke-linejoin="round"/><path d="M834.6,369.2 L837.75,372.4 L840.9,369.2" stroke="#444444" stroke-width="1.1" fill="none" stroke-linecap="round" stroke-linejoin="round"/><rect x="911.40" y="314.40" width="33.00" height="32.00" fill="#fbfbfb" stroke="#3f3f3f" stroke-width="1.3"/><rect x="912.00" y="315.00" width="31.80" height="4.40" fill="#a8a8a8"/><path d="M911.4,319.6 H944.4 M922.4,319.6 V346.4 M933.4,319.6 V346.4 M911.4,328.4 H944.4 M911.4,337.4 H944.4" stroke="#888" stroke-width="1" fill="none"/><circle cx="926.9" cy="327.8" r="10.2" stroke="#3f3f3f" stroke-width="1.4" fill="#f8f8f8"/><rect x="920.80" y="327.40" width="3.00" height="5.40" fill="#b8b8b8"/><rect x="924.60" y="322.20" width="3.20" height="10.60" fill="#ffffff" stroke="#666" stroke-width="0.9"/><rect x="928.40" y="324.40" width="3.40" height="8.40" fill="#2b88d8"/><path d="M933.8,335 L944.2,346" stroke="#3f3f3f" stroke-width="1.4" fill="none"/><text x="906.70" y="361.40" font-size="12.2" fill="#454545" textLength="42.30" lengthAdjust="spacingAndGlyphs">Analyze</text><text x="915.00" y="378.00" font-size="12.2" fill="#454545" textLength="25.80" lengthAdjust="spacingAndGlyphs">Data</text><path d="M987.2,398 H993.6 M993.9,393.6 V402.2 L997.4,399.8 H1002.6 V402 M993.9,393.6 L997.4,396.2 H1002.6 V394 M1002.6,394 V402" stroke="#444444" stroke-width="1.1" fill="none" stroke-linejoin="round"/><rect x="15.00" y="406.20" width="996.00" height="1.20" fill="#dadada"/></g><rect x="3.50" y="4.00" width="948.00" height="533.50" fill="none" stroke="#217346" stroke-width="1"/></g><rect x="768.00" y="39.00" width="3.00" height="192.00" fill="url(#menush)"/><rect x="771.00" y="39.00" width="250.00" height="192.00" fill="#ffffff"/><rect x="771.00" y="39.00" width="250.00" height="192.00" fill="none" stroke="#e0e0e0" stroke-width="0.8"/><path d="M788.2,77.7 V50.45 H815.3" stroke="#595959" stroke-width="1.3" fill="none"/><path d="M789.5,55.4 H815.3" stroke="#333" stroke-width="1.1" fill="none" stroke-dasharray="1.4,1.6"/><path d="M802.1,74.5 V62.2 M796.6,67.2 L802.1,61.8 L807.6,67.2" stroke="#2b88d8" stroke-width="1.3" fill="none"/><text x="824.40" y="60.30" font-size="11.9" fill="#252525" font-weight="bold" textLength="98.90" lengthAdjust="spacingAndGlyphs">Auto-hide Ribbon</text><rect x="824.60" y="61.60" width="7.60" height="1.00" fill="#252525"/><text x="824.40" y="79.40" font-size="12" fill="#4a4a4a" textLength="170.60" lengthAdjust="spacingAndGlyphs">Hide the Ribbon. Click at the top</text><text x="824.40" y="94.80" font-size="12" fill="#4a4a4a" textLength="150.30" lengthAdjust="spacingAndGlyphs">of the application to show it.</text><rect x="789.00" y="125.00" width="26.40" height="16.00" fill="#f4f4f4"/><path d="M788.2,141 V114.4 H815.4 M788.2,117.2 H815.4 M788.2,124.8 H815.4" stroke="#595959" stroke-width="1.2" fill="none"/><path d="M790,121.3 H796.6 M807.6,121.3 H814" stroke="#777" stroke-width="1.1" fill="none"/><path d="M799,121.3 H805.6" stroke="#2b88d8" stroke-width="1.6" fill="none"/><text x="824.40" y="123.50" font-size="11.9" fill="#252525" font-weight="bold" textLength="59.20" lengthAdjust="spacingAndGlyphs">Show Tabs</text><rect x="871.40" y="124.80" width="7.20" height="1.00" fill="#252525"/><text x="824.40" y="143.00" font-size="12" fill="#4a4a4a" textLength="160.00" lengthAdjust="spacingAndGlyphs">Show Ribbon tabs only. Click a</text><text x="824.40" y="158.20" font-size="12" fill="#4a4a4a" textLength="144.40" lengthAdjust="spacingAndGlyphs">tab to show the commands.</text><rect x="772.50" y="166.40" width="245.00" height="62.00" fill="#d3d2d1" stroke="#f6533f" stroke-width="3"/><rect x="784.40" y="173.60" width="35.00" height="35.00" fill="#c6c5c4" stroke="#a9a8a7" stroke-width="1"/><rect x="788.80" y="180.60" width="26.60" height="17.00" fill="#ffffff"/><rect x="788.80" y="197.60" width="26.60" height="7.00" fill="#eef1f4"/><path d="M788.2,204.4 V177.2 H815.4 M788.2,180.1 H815.4 M788.2,197.2 H815.4" stroke="#555" stroke-width="1.3" fill="none"/><path d="M790.2,184.6 H796.4 M807.6,184.6 H814" stroke="#777" stroke-width="1.2" fill="none"/><path d="M798.6,184.6 H805.4" stroke="#2b88d8" stroke-width="1.7" fill="none"/><rect x="790.60" y="188.20" width="6.20" height="6.20" fill="#ffffff" stroke="#5a5a5a" stroke-width="1.2" rx="0.8"/><rect x="799.00" y="188.20" width="6.20" height="6.20" fill="#ffffff" stroke="#5a5a5a" stroke-width="1.2" rx="0.8"/><rect x="807.60" y="188.20" width="6.20" height="6.20" fill="#ffffff" stroke="#5a5a5a" stroke-width="1.2" rx="0.8"/><text x="824.40" y="187.20" font-size="11.9" fill="#252525" font-weight="bold" textLength="148.60" lengthAdjust="spacingAndGlyphs">Show Tabs and Commands</text><rect x="918.00" y="188.60" width="7.00" height="1.00" fill="#252525"/><text x="824.40" y="206.50" font-size="12" fill="#4a4a4a" textLength="117.30" lengthAdjust="spacingAndGlyphs">Show Ribbon tabs and</text><text x="824.40" y="221.20" font-size="12" fill="#4a4a4a" textLength="123.00" lengthAdjust="spacingAndGlyphs">commands all the time.</text><rect x="12.00" y="237.00" width="1002.00" height="565.00" fill="#f6533f"/><rect x="14.00" y="239.00" width="998.00" height="561.00" fill="#217346"/><g clip-path="url(#botclip)"><rect x="15.00" y="239.00" width="996.00" height="560.00" fill="#ffffff"/><rect x="15.00" y="400.00" width="996.00" height="400.00" fill="#ffffff"/><rect x="15.00" y="400.00" width="27.60" height="352.50" fill="#e6e6e6"/><rect x="42.20" y="412.40" width="947.80" height="1.00" fill="#dcdcdc"/><rect x="15.00" y="412.40" width="27.60" height="1.00" fill="#cdcdcd"/><rect x="42.20" y="432.37" width="947.80" height="1.00" fill="#dcdcdc"/><rect x="15.00" y="432.37" width="27.60" height="1.00" fill="#cdcdcd"/><rect x="42.20" y="452.34" width="947.80" height="1.00" fill="#dcdcdc"/><rect x="15.00" y="452.34" width="27.60" height="1.00" fill="#cdcdcd"/><rect x="42.20" y="472.31" width="947.80" height="1.00" fill="#dcdcdc"/><rect x="15.00" y="472.31" width="27.60" height="1.00" fill="#cdcdcd"/><rect x="42.20" y="492.28" width="947.80" height="1.00" fill="#dcdcdc"/><rect x="15.00" y="492.28" width="27.60" height="1.00" fill="#cdcdcd"/><rect x="42.20" y="512.25" width="947.80" height="1.00" fill="#dcdcdc"/><rect x="15.00" y="512.25" width="27.60" height="1.00" fill="#cdcdcd"/><rect x="42.20" y="532.22" width="947.80" height="1.00" fill="#dcdcdc"/><rect x="15.00" y="532.22" width="27.60" height="1.00" fill="#cdcdcd"/><rect x="42.20" y="552.19" width="947.80" height="1.00" fill="#dcdcdc"/><rect x="15.00" y="552.19" width="27.60" height="1.00" fill="#cdcdcd"/><rect x="42.20" y="572.16" width="947.80" height="1.00" fill="#dcdcdc"/><rect x="15.00" y="572.16" width="27.60" height="1.00" fill="#cdcdcd"/><rect x="42.20" y="592.13" width="947.80" height="1.00" fill="#dcdcdc"/><rect x="15.00" y="592.13" width="27.60" height="1.00" fill="#cdcdcd"/><rect x="42.20" y="612.10" width="947.80" height="1.00" fill="#dcdcdc"/><rect x="15.00" y="612.10" width="27.60" height="1.00" fill="#cdcdcd"/><rect x="42.20" y="632.07" width="947.80" height="1.00" fill="#dcdcdc"/><rect x="15.00" y="632.07" width="27.60" height="1.00" fill="#cdcdcd"/><rect x="42.20" y="652.04" width="947.80" height="1.00" fill="#dcdcdc"/><rect x="15.00" y="652.04" width="27.60" height="1.00" fill="#cdcdcd"/><rect x="42.20" y="672.01" width="947.80" height="1.00" fill="#dcdcdc"/><rect x="15.00" y="672.01" width="27.60" height="1.00" fill="#cdcdcd"/><rect x="42.20" y="691.98" width="947.80" height="1.00" fill="#dcdcdc"/><rect x="15.00" y="691.98" width="27.60" height="1.00" fill="#cdcdcd"/><rect x="42.20" y="711.95" width="947.80" height="1.00" fill="#dcdcdc"/><rect x="15.00" y="711.95" width="27.60" height="1.00" fill="#cdcdcd"/><rect x="42.20" y="731.92" width="947.80" height="1.00" fill="#dcdcdc"/><rect x="15.00" y="731.92" width="27.60" height="1.00" fill="#cdcdcd"/><rect x="117.80" y="400.00" width="1.00" height="352.50" fill="#dcdcdc"/><rect x="197.70" y="400.00" width="1.00" height="352.50" fill="#dcdcdc"/><rect x="278.40" y="400.00" width="1.00" height="352.50" fill="#dcdcdc"/><rect x="372.10" y="400.00" width="1.00" height="352.50" fill="#dcdcdc"/><rect x="450.70" y="400.00" width="1.00" height="352.50" fill="#dcdcdc"/><rect x="500.50" y="400.00" width="1.00" height="352.50" fill="#dcdcdc"/><rect x="593.50" y="400.00" width="1.00" height="352.50" fill="#dcdcdc"/><rect x="669.50" y="400.00" width="1.00" height="352.50" fill="#dcdcdc"/><rect x="755.30" y="400.00" width="1.00" height="352.50" fill="#dcdcdc"/><rect x="841.10" y="400.00" width="1.00" height="352.50" fill="#dcdcdc"/><rect x="917.20" y="400.00" width="1.00" height="352.50" fill="#dcdcdc"/><rect x="983.00" y="400.00" width="1.00" height="352.50" fill="#dcdcdc"/><rect x="41.70" y="400.00" width="1.00" height="352.50" fill="#c6c6c6"/><text x="28.70" y="408.40" font-size="13.2" fill="#333" text-anchor="middle" stroke="#111" stroke-width="0.25">2</text><text x="46.30" y="408.40" font-size="13.2" fill="#111" stroke="#111" stroke-width="0.25">January</text><text x="125.40" y="408.40" font-size="13.2" fill="#111" stroke="#111" stroke-width="0.25">$</text><text x="191.20" y="408.40" font-size="13.2" fill="#111" text-anchor="end" stroke="#111" stroke-width="0.25">700.00</text><text x="205.50" y="408.40" font-size="13.2" fill="#111" stroke="#111" stroke-width="0.25">$</text><text x="270.80" y="408.40" font-size="13.2" fill="#111" text-anchor="end" stroke="#111" stroke-width="0.25">450.00</text><text x="285.30" y="408.40" font-size="13.2" fill="#111" stroke="#111" stroke-width="0.25">$</text><text x="365.50" y="408.40" font-size="13.2" fill="#111" text-anchor="end" stroke="#111" stroke-width="0.25">450.00</text><text x="380.00" y="408.40" font-size="13.2" fill="#111" stroke="#111" stroke-width="0.25">$</text><text x="443.70" y="408.40" font-size="13.2" fill="#111" text-anchor="end" stroke="#111" stroke-width="0.25">525.00</text><text x="28.70" y="428.37" font-size="13.2" fill="#333" text-anchor="middle" stroke="#111" stroke-width="0.25">3</text><text x="46.30" y="428.37" font-size="13.2" fill="#111" stroke="#111" stroke-width="0.25">February</text><text x="125.40" y="428.37" font-size="13.2" fill="#111" stroke="#111" stroke-width="0.25">$</text><text x="191.20" y="428.37" font-size="13.2" fill="#111" text-anchor="end" stroke="#111" stroke-width="0.25">700.00</text><text x="205.50" y="428.37" font-size="13.2" fill="#111" stroke="#111" stroke-width="0.25">$</text><text x="270.80" y="428.37" font-size="13.2" fill="#111" text-anchor="end" stroke="#111" stroke-width="0.25">450.00</text><text x="285.30" y="428.37" font-size="13.2" fill="#111" stroke="#111" stroke-width="0.25">$</text><text x="365.50" y="428.37" font-size="13.2" fill="#111" text-anchor="end" stroke="#111" stroke-width="0.25">550.00</text><text x="380.00" y="428.37" font-size="13.2" fill="#111" stroke="#111" stroke-width="0.25">$</text><text x="443.70" y="428.37" font-size="13.2" fill="#111" text-anchor="end" stroke="#111" stroke-width="0.25">550.00</text><text x="28.70" y="448.34" font-size="13.2" fill="#333" text-anchor="middle" stroke="#111" stroke-width="0.25">4</text><text x="46.30" y="448.34" font-size="13.2" fill="#111" stroke="#111" stroke-width="0.25">March</text><text x="125.40" y="448.34" font-size="13.2" fill="#111" stroke="#111" stroke-width="0.25">$</text><text x="191.20" y="448.34" font-size="13.2" fill="#111" text-anchor="end" stroke="#111" stroke-width="0.25">600.00</text><text x="205.50" y="448.34" font-size="13.2" fill="#111" stroke="#111" stroke-width="0.25">$</text><text x="270.80" y="448.34" font-size="13.2" fill="#111" text-anchor="end" stroke="#111" stroke-width="0.25">400.00</text><text x="285.30" y="448.34" font-size="13.2" fill="#111" stroke="#111" stroke-width="0.25">$</text><text x="365.50" y="448.34" font-size="13.2" fill="#111" text-anchor="end" stroke="#111" stroke-width="0.25">625.00</text><text x="380.00" y="448.34" font-size="13.2" fill="#111" stroke="#111" stroke-width="0.25">$</text><text x="443.70" y="448.34" font-size="13.2" fill="#111" text-anchor="end" stroke="#111" stroke-width="0.25">650.00</text><text x="28.70" y="468.31" font-size="13.2" fill="#333" text-anchor="middle" stroke="#111" stroke-width="0.25">5</text><text x="46.30" y="468.31" font-size="13.2" fill="#111" stroke="#111" stroke-width="0.25">April</text><text x="125.40" y="468.31" font-size="13.2" fill="#111" stroke="#111" stroke-width="0.25">$</text><text x="191.20" y="468.31" font-size="13.2" fill="#111" text-anchor="end" stroke="#111" stroke-width="0.25">550.00</text><text x="205.50" y="468.31" font-size="13.2" fill="#111" stroke="#111" stroke-width="0.25">$</text><text x="270.80" y="468.31" font-size="13.2" fill="#111" text-anchor="end" stroke="#111" stroke-width="0.25">350.00</text><text x="285.30" y="468.31" font-size="13.2" fill="#111" stroke="#111" stroke-width="0.25">$</text><text x="365.50" y="468.31" font-size="13.2" fill="#111" text-anchor="end" stroke="#111" stroke-width="0.25">725.00</text><text x="380.00" y="468.31" font-size="13.2" fill="#111" stroke="#111" stroke-width="0.25">$</text><text x="443.70" y="468.31" font-size="13.2" fill="#111" text-anchor="end" stroke="#111" stroke-width="0.25">825.00</text><text x="28.70" y="488.28" font-size="13.2" fill="#333" text-anchor="middle" stroke="#111" stroke-width="0.25">6</text><text x="46.30" y="488.28" font-size="13.2" fill="#111" stroke="#111" stroke-width="0.25">May</text><text x="125.40" y="488.28" font-size="13.2" fill="#111" stroke="#111" stroke-width="0.25">$</text><text x="191.20" y="488.28" font-size="13.2" fill="#111" text-anchor="end" stroke="#111" stroke-width="0.25">440.00</text><text x="205.50" y="488.28" font-size="13.2" fill="#111" stroke="#111" stroke-width="0.25">$</text><text x="270.80" y="488.28" font-size="13.2" fill="#111" text-anchor="end" stroke="#111" stroke-width="0.25">300.00</text><text x="285.30" y="488.28" font-size="13.2" fill="#111" stroke="#111" stroke-width="0.25">$</text><text x="365.50" y="488.28" font-size="13.2" fill="#111" text-anchor="end" stroke="#111" stroke-width="0.25">850.00</text><text x="380.00" y="488.28" font-size="13.2" fill="#111" stroke="#111" stroke-width="0.25">$</text><text x="443.70" y="488.28" font-size="13.2" fill="#111" text-anchor="end" stroke="#111" stroke-width="0.25">900.00</text><text x="28.70" y="508.25" font-size="13.2" fill="#333" text-anchor="middle" stroke="#111" stroke-width="0.25">7</text><text x="46.30" y="508.25" font-size="13.2" fill="#111" stroke="#111" stroke-width="0.25">June</text><text x="125.40" y="508.25" font-size="13.2" fill="#111" stroke="#111" stroke-width="0.25">$</text><text x="191.20" y="508.25" font-size="13.2" fill="#111" text-anchor="end" stroke="#111" stroke-width="0.25">375.00</text><text x="205.50" y="508.25" font-size="13.2" fill="#111" stroke="#111" stroke-width="0.25">$</text><text x="270.80" y="508.25" font-size="13.2" fill="#111" text-anchor="end" stroke="#111" stroke-width="0.25">200.00</text><text x="285.30" y="508.25" font-size="13.2" fill="#111" stroke="#111" stroke-width="0.25">$</text><text x="365.50" y="508.25" font-size="13.2" fill="#111" text-anchor="end" stroke="#111" stroke-width="0.25">1,800.00</text><text x="380.00" y="508.25" font-size="13.2" fill="#111" stroke="#111" stroke-width="0.25">$</text><text x="443.70" y="508.25" font-size="13.2" fill="#111" text-anchor="end" stroke="#111" stroke-width="0.25">1,050.00</text><text x="28.70" y="528.22" font-size="13.2" fill="#333" text-anchor="middle" stroke="#111" stroke-width="0.25">8</text><text x="46.30" y="528.22" font-size="13.2" fill="#111" stroke="#111" stroke-width="0.25">July</text><text x="125.40" y="528.22" font-size="13.2" fill="#111" stroke="#111" stroke-width="0.25">$</text><text x="191.20" y="528.22" font-size="13.2" fill="#111" text-anchor="end" stroke="#111" stroke-width="0.25">1,800.00</text><text x="205.50" y="528.22" font-size="13.2" fill="#111" stroke="#111" stroke-width="0.25">$</text><text x="270.80" y="528.22" font-size="13.2" fill="#111" text-anchor="end" stroke="#111" stroke-width="0.25">450.00</text><text x="285.30" y="528.22" font-size="13.2" fill="#111" stroke="#111" stroke-width="0.25">$</text><text x="365.50" y="528.22" font-size="13.2" fill="#111" text-anchor="end" stroke="#111" stroke-width="0.25">450.00</text><text x="380.00" y="528.22" font-size="13.2" fill="#111" stroke="#111" stroke-width="0.25">$</text><text x="443.70" y="528.22" font-size="13.2" fill="#111" text-anchor="end" stroke="#111" stroke-width="0.25">625.00</text><text x="28.70" y="548.19" font-size="13.2" fill="#333" text-anchor="middle" stroke="#111" stroke-width="0.25">9</text><text x="46.30" y="548.19" font-size="13.2" fill="#111" stroke="#111" stroke-width="0.25">August</text><text x="125.40" y="548.19" font-size="13.2" fill="#111" stroke="#111" stroke-width="0.25">$</text><text x="191.20" y="548.19" font-size="13.2" fill="#111" text-anchor="end" stroke="#111" stroke-width="0.25">700.00</text><text x="205.50" y="548.19" font-size="13.2" fill="#111" stroke="#111" stroke-width="0.25">$</text><text x="270.80" y="548.19" font-size="13.2" fill="#111" text-anchor="end" stroke="#111" stroke-width="0.25">450.00</text><text x="285.30" y="548.19" font-size="13.2" fill="#111" stroke="#111" stroke-width="0.25">$</text><text x="365.50" y="548.19" font-size="13.2" fill="#111" text-anchor="end" stroke="#111" stroke-width="0.25">550.00</text><text x="380.00" y="548.19" font-size="13.2" fill="#111" stroke="#111" stroke-width="0.25">$</text><text x="443.70" y="548.19" font-size="13.2" fill="#111" text-anchor="end" stroke="#111" stroke-width="0.25">550.00</text><text x="28.70" y="568.16" font-size="13.2" fill="#333" text-anchor="middle" stroke="#111" stroke-width="0.25">10</text><text x="46.30" y="568.16" font-size="13.2" fill="#111" stroke="#111" stroke-width="0.25">September</text><text x="125.40" y="568.16" font-size="13.2" fill="#111" stroke="#111" stroke-width="0.25">$</text><text x="191.20" y="568.16" font-size="13.2" fill="#111" text-anchor="end" stroke="#111" stroke-width="0.25">600.00</text><text x="205.50" y="568.16" font-size="13.2" fill="#111" stroke="#111" stroke-width="0.25">$</text><text x="270.80" y="568.16" font-size="13.2" fill="#111" text-anchor="end" stroke="#111" stroke-width="0.25">400.00</text><text x="285.30" y="568.16" font-size="13.2" fill="#111" stroke="#111" stroke-width="0.25">$</text><text x="365.50" y="568.16" font-size="13.2" fill="#111" text-anchor="end" stroke="#111" stroke-width="0.25">625.00</text><text x="380.00" y="568.16" font-size="13.2" fill="#111" stroke="#111" stroke-width="0.25">$</text><text x="443.70" y="568.16" font-size="13.2" fill="#111" text-anchor="end" stroke="#111" stroke-width="0.25">650.00</text><text x="28.70" y="588.13" font-size="13.2" fill="#333" text-anchor="middle" stroke="#111" stroke-width="0.25">11</text><text x="46.30" y="588.13" font-size="13.2" fill="#111" stroke="#111" stroke-width="0.25">October</text><text x="125.40" y="588.13" font-size="13.2" fill="#111" stroke="#111" stroke-width="0.25">$</text><text x="191.20" y="588.13" font-size="13.2" fill="#111" text-anchor="end" stroke="#111" stroke-width="0.25">550.00</text><text x="205.50" y="588.13" font-size="13.2" fill="#111" stroke="#111" stroke-width="0.25">$</text><text x="270.80" y="588.13" font-size="13.2" fill="#111" text-anchor="end" stroke="#111" stroke-width="0.25">350.00</text><text x="285.30" y="588.13" font-size="13.2" fill="#111" stroke="#111" stroke-width="0.25">$</text><text x="365.50" y="588.13" font-size="13.2" fill="#111" text-anchor="end" stroke="#111" stroke-width="0.25">725.00</text><text x="380.00" y="588.13" font-size="13.2" fill="#111" stroke="#111" stroke-width="0.25">$</text><text x="443.70" y="588.13" font-size="13.2" fill="#111" text-anchor="end" stroke="#111" stroke-width="0.25">825.00</text><text x="28.70" y="608.10" font-size="13.2" fill="#333" text-anchor="middle" stroke="#111" stroke-width="0.25">12</text><text x="46.30" y="608.10" font-size="13.2" fill="#111" stroke="#111" stroke-width="0.25">November</text><text x="125.40" y="608.10" font-size="13.2" fill="#111" stroke="#111" stroke-width="0.25">$</text><text x="191.20" y="608.10" font-size="13.2" fill="#111" text-anchor="end" stroke="#111" stroke-width="0.25">440.00</text><text x="205.50" y="608.10" font-size="13.2" fill="#111" stroke="#111" stroke-width="0.25">$</text><text x="270.80" y="608.10" font-size="13.2" fill="#111" text-anchor="end" stroke="#111" stroke-width="0.25">300.00</text><text x="285.30" y="608.10" font-size="13.2" fill="#111" stroke="#111" stroke-width="0.25">$</text><text x="365.50" y="608.10" font-size="13.2" fill="#111" text-anchor="end" stroke="#111" stroke-width="0.25">850.00</text><text x="380.00" y="608.10" font-size="13.2" fill="#111" stroke="#111" stroke-width="0.25">$</text><text x="443.70" y="608.10" font-size="13.2" fill="#111" text-anchor="end" stroke="#111" stroke-width="0.25">900.00</text><text x="28.70" y="628.07" font-size="13.2" fill="#333" text-anchor="middle" stroke="#111" stroke-width="0.25">13</text><text x="46.30" y="628.07" font-size="13.2" fill="#111" stroke="#111" stroke-width="0.25">December</text><text x="125.40" y="628.07" font-size="13.2" fill="#111" stroke="#111" stroke-width="0.25">$</text><text x="191.20" y="628.07" font-size="13.2" fill="#111" text-anchor="end" stroke="#111" stroke-width="0.25">375.00</text><text x="205.50" y="628.07" font-size="13.2" fill="#111" stroke="#111" stroke-width="0.25">$</text><text x="270.80" y="628.07" font-size="13.2" fill="#111" text-anchor="end" stroke="#111" stroke-width="0.25">195.00</text><text x="285.30" y="628.07" font-size="13.2" fill="#111" stroke="#111" stroke-width="0.25">$</text><text x="365.50" y="628.07" font-size="13.2" fill="#111" text-anchor="end" stroke="#111" stroke-width="0.25">800.00</text><text x="380.00" y="628.07" font-size="13.2" fill="#111" stroke="#111" stroke-width="0.25">$</text><text x="443.70" y="628.07" font-size="13.2" fill="#111" text-anchor="end" stroke="#111" stroke-width="0.25">1,050.00</text><text x="28.70" y="648.04" font-size="13.2" fill="#333" text-anchor="middle" stroke="#111" stroke-width="0.25">14</text><text x="28.70" y="668.01" font-size="13.2" fill="#333" text-anchor="middle" stroke="#111" stroke-width="0.25">24</text><text x="28.70" y="687.98" font-size="13.2" fill="#333" text-anchor="middle" stroke="#111" stroke-width="0.25">25</text><text x="28.70" y="707.95" font-size="13.2" fill="#333" text-anchor="middle" stroke="#111" stroke-width="0.25">26</text><text x="28.70" y="727.92" font-size="13.2" fill="#333" text-anchor="middle" stroke="#111" stroke-width="0.25">27</text><text x="28.70" y="747.89" font-size="13.2" fill="#333" text-anchor="middle" stroke="#111" stroke-width="0.25">28</text><rect x="989.50" y="400.00" width="21.50" height="352.50" fill="#f0f0f0"/><rect x="989.50" y="400.00" width="1.50" height="352.50" fill="#c8c8c8"/><rect x="993.60" y="405.00" width="14.60" height="223.00" fill="#ffffff" stroke="#bcbcbc" stroke-width="1"/><rect x="993.40" y="738.40" width="15.00" height="14.20" fill="#ffffff" stroke="#c6c6c6" stroke-width="1"/><path d="M997.6,743.6 H1004.2 L1000.9,747.6 Z" stroke="#222" stroke-width="0.6" fill="#222"/><rect x="15.00" y="752.50" width="996.00" height="24.50" fill="#e6e6e6"/><rect x="15.00" y="752.30" width="996.00" height="1.40" fill="#c6c6c6"/><path d="M43,760.8 V767.6 L37.4,764.2 Z" stroke="#217346" stroke-width="0.5" fill="#217346"/><path d="M62,760.8 V767.6 L67.6,764.2 Z" stroke="#217346" stroke-width="0.5" fill="#217346"/><rect x="82.80" y="765.20" width="1.80" height="1.80" fill="#217346"/><rect x="87.80" y="765.20" width="1.80" height="1.80" fill="#217346"/><rect x="92.80" y="765.20" width="1.80" height="1.80" fill="#217346"/><rect x="100.40" y="756.50" width="1.00" height="16.00" fill="#b8b8b8"/><rect x="157.30" y="756.50" width="1.00" height="16.00" fill="#b8b8b8"/><rect x="230.80" y="756.50" width="1.00" height="16.00" fill="#b8b8b8"/><rect x="334.70" y="756.50" width="1.00" height="16.00" fill="#b8b8b8"/><rect x="429.50" y="756.50" width="1.00" height="16.00" fill="#b8b8b8"/><rect x="711.50" y="756.50" width="1.00" height="16.00" fill="#b8b8b8"/><rect x="778.00" y="756.50" width="1.00" height="16.00" fill="#b8b8b8"/><text x="112.30" y="766.60" font-size="13.6" fill="#444" textLength="32.70" lengthAdjust="spacingAndGlyphs">Table</text><text x="169.00" y="766.60" font-size="13.6" fill="#444" textLength="50.30" lengthAdjust="spacingAndGlyphs">Sheet13</text><text x="242.90" y="766.60" font-size="13.6" fill="#444" textLength="80.30" lengthAdjust="spacingAndGlyphs">Index_Match</text><text x="347.30" y="766.60" font-size="13.6" fill="#444" textLength="69.40" lengthAdjust="spacingAndGlyphs">SALES-Star</text><text x="441.60" y="766.60" font-size="13.6" fill="#444" textLength="50.30" lengthAdjust="spacingAndGlyphs">Sheet12</text><text x="632.60" y="766.60" font-size="13.6" fill="#444" textLength="67.20" lengthAdjust="spacingAndGlyphs">CellPicture</text><text x="723.00" y="766.60" font-size="13.6" fill="#444" textLength="43.30" lengthAdjust="spacingAndGlyphs">Sheet5</text><rect x="504.30" y="752.30" width="117.20" height="21.50" fill="#ffffff" stroke="#d0d0d0" stroke-width="0.8"/><rect x="504.30" y="771.80" width="117.20" height="2.00" fill="#217346"/><text x="514.20" y="766.70" font-size="13.6" fill="#217346" font-weight="bold" textLength="96.30" lengthAdjust="spacingAndGlyphs">SALES-Star (2)</text><text x="788.30" y="766.60" font-size="13.6" fill="#444" textLength="4.00" lengthAdjust="spacingAndGlyphs">S</text><rect x="788.00" y="756.00" width="5.00" height="14.00" fill="#e6e6e6"/><rect x="790.00" y="758.00" width="1.00" height="2.00" fill="#888"/><rect x="790.00" y="762.00" width="1.00" height="2.00" fill="#888"/><rect x="797.00" y="765.20" width="1.80" height="1.80" fill="#217346"/><rect x="801.80" y="765.20" width="1.80" height="1.80" fill="#217346"/><rect x="806.60" y="765.20" width="1.80" height="1.80" fill="#217346"/><circle cx="827.4" cy="765" r="7.8" stroke="#555" stroke-width="1.1" fill="none"/><path d="M823,765 H831.8 M827.4,760.6 V769.4" stroke="#555" stroke-width="1.1" fill="none"/><rect x="851.20" y="760.50" width="1.40" height="1.40" fill="#999"/><rect x="851.20" y="764.50" width="1.40" height="1.40" fill="#999"/><rect x="851.20" y="768.50" width="1.40" height="1.40" fill="#999"/><rect x="866.00" y="757.40" width="108.60" height="15.00" fill="#e6e6e6" stroke="#c8c8c8" stroke-width="0.8"/><rect x="866.00" y="757.40" width="15.00" height="15.00" fill="#ffffff" stroke="#c8c8c8" stroke-width="0.8"/><rect x="881.00" y="757.40" width="59.40" height="15.00" fill="#ffffff" stroke="#bcbcbc" stroke-width="0.8"/><rect x="974.40" y="757.40" width="15.40" height="15.00" fill="#ffffff" stroke="#c8c8c8" stroke-width="0.8"/><path d="M875.6,761.4 V768.2 L871.8,764.8 Z" stroke="#222" stroke-width="0.5" fill="#222"/><path d="M980.2,761.4 V768.2 L984,764.8 Z" stroke="#222" stroke-width="0.5" fill="#222"/><rect x="15.00" y="777.00" width="996.00" height="22.00" fill="#f3f2f1"/><text x="22.40" y="792.60" font-size="10.6" fill="#444" textLength="30.00" lengthAdjust="spacingAndGlyphs">Ready</text><path d="M87.6,786.4 V782.4 H73.6 V794.4 H78.6 M73.6,784.7 H87.6 M76.4,786.2 H78.6 M76.6,788.2 V792.6" stroke="#555" stroke-width="1.1" fill="none"/><circle cx="83.1" cy="790.6" r="4.1" stroke="#555" stroke-width="1.1" fill="#f3f2f1"/><circle cx="83.1" cy="790.6" r="1.8" fill="#444"/><path d="M581.6,790.6 H576.8 V782.6 H590.6 V788.2" stroke="#555" stroke-width="1.2" fill="none"/><circle cx="586.2" cy="790.8" r="2.6" stroke="#333" stroke-width="1.3" fill="#f3f2f1" stroke-dasharray="1.3,0.7"/><circle cx="586.2" cy="790.8" r="1" fill="#333"/><text x="593.70" y="792.60" font-size="10.6" fill="#444" textLength="76.00" lengthAdjust="spacingAndGlyphs">Display Settings</text><rect x="690.30" y="777.40" width="41.70" height="21.60" fill="#d2d2d2"/><rect x="703.80" y="781.80" width="13.00" height="12.60" fill="none" stroke="#444" stroke-width="1.1"/><path d="M708.1,781.8 V794.4 M712.4,781.8 V794.4 M703.8,786 H716.8 M703.8,790.2 H716.8" stroke="#444" stroke-width="1" fill="none"/><rect x="745.80" y="781.60" width="13.60" height="12.60" fill="none" stroke="#555" stroke-width="1.1"/><rect x="748.80" y="783.60" width="7.60" height="8.00" fill="none" stroke="#555" stroke-width="1"/><path d="M750,785.8 H755.4 M750,787.8 H755.4 M750,789.8 H755.4" stroke="#777" stroke-width="0.8" fill="none"/><rect x="787.60" y="781.60" width="13.20" height="12.60" fill="none" stroke="#555" stroke-width="1.1"/><path d="M787.6,788.6 H795.4 V781.6 M791.4,781.6 V788.6" stroke="#555" stroke-width="1.1" fill="none"/><path d="M820.2,788.2 H828" stroke="#555" stroke-width="1.1" fill="none"/><rect x="834.40" y="787.60" width="103.00" height="1.00" fill="#777"/><rect x="883.40" y="781.80" width="5.80" height="12.20" fill="#444"/><path d="M942.4,788.2 H950.4 M946.4,784.2 V792.2" stroke="#555" stroke-width="1.1" fill="none"/><text x="964.00" y="792.60" font-size="10.6" fill="#444" textLength="26.40" lengthAdjust="spacingAndGlyphs">100%</text><rect x="15.00" y="237.00" width="996.00" height="38.00" fill="#217346"/><rect x="15.00" y="275.00" width="996.00" height="132.00" fill="#f3f2f1"/><path d="M37.6,251.2 H45.3 L50.8,256.7 V267 H37.6 Z M45.3,251.2 V256.7 H50.8" stroke="white" stroke-width="1.15" fill="none"/><path d="M65.4,264.2 V253 H71 L72.6,254.6 H78.6 V257.6 M65.4,264.2 L68.4,257.6 H80.6 L77.6,264.2 Z" stroke="white" stroke-width="1.15" fill="none" stroke-linejoin="round"/><path d="M95.3,251 V257.6 H101.8 M95.6,257.3 L99.6,253.3 C103.2,249.7 109.8,251.6 109.8,257 C109.8,259.4 108.7,260.8 107.3,262.2 L102.3,267.2" stroke="white" stroke-width="1.15" fill="none" stroke-linejoin="round"/><path d="M116.9,256.2 L119.9,259.4 L122.9,256.2" stroke="white" stroke-width="1.1" fill="none" stroke-linecap="round" stroke-linejoin="round"/><g transform="translate(244.4,0) scale(-1,1)"><path d="M95.3,251 V257.6 H101.8 M95.6,257.3 L99.6,253.3 C103.2,249.7 109.8,251.6 109.8,257 C109.8,259.4 108.7,260.8 107.3,262.2 L102.3,267.2" stroke="white" stroke-width="1.15" fill="none" stroke-linejoin="round"/></g><path d="M157,256.2 L159.9,259.4 L162.8,256.2" stroke="white" stroke-width="1.1" fill="none" stroke-linecap="round" stroke-linejoin="round"/><text x="173.60" y="257.30" font-size="8.6" fill="white" font-weight="bold" textLength="7.20" lengthAdjust="spacingAndGlyphs">A</text><text x="173.60" y="267.30" font-size="8.6" fill="white" font-weight="bold" textLength="7.20" lengthAdjust="spacingAndGlyphs">Z</text><path d="M186.6,251 V266.6 M183.0,262.8 L186.6,266.6 L190.2,262.8" stroke="white" stroke-width="1.2" fill="none"/><text x="202.80" y="257.30" font-size="8.6" fill="white" font-weight="bold" textLength="7.20" lengthAdjust="spacingAndGlyphs">Z</text><text x="202.80" y="267.30" font-size="8.6" fill="white" font-weight="bold" textLength="7.20" lengthAdjust="spacingAndGlyphs">A</text><path d="M215.9,251 V266.6 M212.3,262.8 L215.9,266.6 L219.5,262.8" stroke="white" stroke-width="1.2" fill="none"/><text x="232.70" y="261.60" font-size="12" fill="white" textLength="51.60" lengthAdjust="spacingAndGlyphs">AutoSave</text><rect x="291.70" y="248.00" width="39.50" height="17.00" fill="white" rx="8.5"/><text x="298.00" y="260.60" font-size="10" fill="#217346" textLength="12.50" lengthAdjust="spacingAndGlyphs">On</text><circle cx="322.6" cy="256.5" r="4.4" fill="#217346"/><path d="M348.2,256.2 L350.6,258.5 L348.2,260.8 M352.6,256.2 L355,258.5 L352.6,260.8" stroke="white" stroke-width="1.2" fill="none"/><text x="400.80" y="262.50" font-size="12.2" fill="white" textLength="49.20" lengthAdjust="spacingAndGlyphs">Appare...</text><path d="M459.3,256 L463.45000000000005,260.4 L467.6,256" stroke="white" stroke-width="1.4" fill="none" stroke-linecap="round" stroke-linejoin="round"/><circle cx="524.5" cy="255.4" r="5.1" stroke="white" stroke-width="1.2" fill="none"/><path d="M516,264.6 L520.9,259.3" stroke="white" stroke-width="1.3" fill="none"/><path d="M744.2,249.9 H753.8 L757.2,255 L749,264.2 L740.8,255 Z M740.8,255 H757.2 M746.6,249.9 L745.2,255 L749,264.2 L752.8,255 L751.4,249.9" stroke="white" stroke-width="1.1" fill="none" stroke-linejoin="round"/><path d="M798.5,250.8 L803.7,256.3 L791.7,264.5 L789.6,262.6 Z M795.6,262.4 A2,2 0 0 0 799.3,260.6 M800.9,249.8 L801.1,249.9 M802.8,251.3 L805.2,249.4 M804.3,253.9 L805.7,253.9" stroke="white" stroke-width="1.1" fill="none" stroke-linejoin="round" stroke-linecap="round"/><rect x="837.70" y="252.40" width="13.20" height="10.00" fill="none" stroke="white" stroke-width="1.1"/><path d="M837.7,254.9 H850.9 M844.3,261.8 V256.6 M842.2,258.6 L844.3,256.5 L846.4,258.6" stroke="white" stroke-width="1.1" fill="none"/><path d="M887.2,256.8 H897.4" stroke="white" stroke-width="1.1" fill="none"/><rect x="934.30" y="252.30" width="10.30" height="10.30" fill="none" stroke="white" stroke-width="1.1" rx="2"/><path d="M981.9,252.1 L992.5,262.7 M992.5,252.1 L981.9,262.7" stroke="white" stroke-width="1.1" fill="none"/><text x="32.90" y="297.10" font-size="13.7" fill="#4a4a4a" textLength="19.60" lengthAdjust="spacingAndGlyphs">File</text><text x="144.40" y="297.10" font-size="13.7" fill="#4a4a4a" textLength="35.20" lengthAdjust="spacingAndGlyphs">Insert</text><text x="203.00" y="297.10" font-size="13.7" fill="#4a4a4a" textLength="32.00" lengthAdjust="spacingAndGlyphs">Draw</text><text x="259.70" y="297.10" font-size="13.7" fill="#4a4a4a" textLength="76.80" lengthAdjust="spacingAndGlyphs">Page Layout</text><text x="360.40" y="297.10" font-size="13.7" fill="#4a4a4a" textLength="56.80" lengthAdjust="spacingAndGlyphs">Formulas</text><text x="441.00" y="297.10" font-size="13.7" fill="#4a4a4a" textLength="29.00" lengthAdjust="spacingAndGlyphs">Data</text><text x="494.00" y="297.10" font-size="13.7" fill="#4a4a4a" textLength="43.00" lengthAdjust="spacingAndGlyphs">Review</text><text x="561.40" y="297.10" font-size="13.7" fill="#4a4a4a" textLength="29.70" lengthAdjust="spacingAndGlyphs">View</text><text x="614.20" y="297.10" font-size="13.7" fill="#4a4a4a" textLength="63.50" lengthAdjust="spacingAndGlyphs">Developer</text><text x="701.60" y="297.10" font-size="13.7" fill="#4a4a4a" textLength="29.00" lengthAdjust="spacingAndGlyphs">Help</text><text x="83.60" y="297.10" font-size="14" fill="#3a3a3a" textLength="38.40" lengthAdjust="spacingAndGlyphs" stroke="#323130" stroke-width="0.55">Home</text><rect x="83.00" y="303.00" width="40.00" height="3.00" fill="#217346" rx="1"/><rect x="768.50" y="279.80" width="102.30" height="23.30" fill="white" stroke="#e1dfdd" stroke-width="1" rx="3.5"/><path d="M776.6,286 H787.5 V293.2 H780.6 L778.3,295.8 V293.2 H776.6 Z" stroke="#217346" stroke-width="1.1" fill="none" stroke-linejoin="round"/><text x="792.60" y="296.30" font-size="14" fill="#217346" textLength="68.60" lengthAdjust="spacingAndGlyphs" stroke="#217346" stroke-width="0.6">Comments</text><rect x="880.40" y="279.80" width="82.60" height="23.30" fill="white" stroke="#e1dfdd" stroke-width="1" rx="3.5"/><path d="M892.5,286.8 H888.3 V296.4 H898.8 V292.5 M891.6,293.5 C892.2,290 894.6,288.8 898.4,288.8 M895.8,286.2 L898.6,288.8 L895.8,291.4" stroke="#217346" stroke-width="1.1" fill="none" stroke-linejoin="round"/><text x="904.00" y="296.10" font-size="14" fill="#217346" textLength="36.80" lengthAdjust="spacingAndGlyphs" stroke="#217346" stroke-width="0.6">Share</text><path d="M952.2,290.6 L955.0,293.4 L957.8,290.6" stroke="#217346" stroke-width="1.2" fill="none" stroke-linecap="round" stroke-linejoin="round"/><path d="M983.3,285.6 V283.6 H994.6 V290.4 H992.2 L990.5,293.4 L989.4,290.4" stroke="#444444" stroke-width="1.1" fill="none" stroke-linejoin="round"/><circle cx="984.4" cy="290.7" r="3.5" stroke="#444444" stroke-width="1.1" fill="none"/><path d="M979.3,299.6 A5.1,5.1 0 0 1 989.5,299.6" stroke="#444444" stroke-width="1.1" fill="none"/><rect x="113.90" y="312.50" width="1.00" height="90.50" fill="#c8c6c4"/><rect x="274.90" y="312.50" width="1.00" height="90.50" fill="#c8c6c4"/><rect x="407.80" y="312.50" width="1.00" height="90.50" fill="#c8c6c4"/><rect x="513.10" y="312.50" width="1.00" height="90.50" fill="#c8c6c4"/><rect x="700.10" y="312.50" width="1.00" height="90.50" fill="#c8c6c4"/><rect x="801.00" y="312.50" width="1.00" height="90.50" fill="#c8c6c4"/><rect x="895.50" y="312.50" width="1.00" height="90.50" fill="#c8c6c4"/><rect x="959.30" y="312.50" width="1.00" height="90.50" fill="#c8c6c4"/><rect x="215.10" y="338.60" width="1.00" height="21.10" fill="#d2d0ce"/><rect x="165.00" y="363.60" width="1.00" height="21.20" fill="#d2d0ce"/><rect x="336.20" y="363.20" width="1.00" height="21.20" fill="#d2d0ce"/><text x="31.70" y="402.90" font-size="11" fill="#5a5a5a" textLength="48.00" lengthAdjust="spacingAndGlyphs">Clipboard</text><text x="176.80" y="402.90" font-size="11" fill="#5a5a5a" textLength="20.00" lengthAdjust="spacingAndGlyphs">Font</text><text x="309.00" y="402.90" font-size="11" fill="#5a5a5a" textLength="48.70" lengthAdjust="spacingAndGlyphs">Alignment</text><text x="433.00" y="402.90" font-size="11" fill="#5a5a5a" textLength="39.00" lengthAdjust="spacingAndGlyphs">Number</text><text x="592.90" y="402.90" font-size="11" fill="#5a5a5a" textLength="27.10" lengthAdjust="spacingAndGlyphs">Styles</text><text x="739.60" y="402.90" font-size="11" fill="#5a5a5a" textLength="21.70" lengthAdjust="spacingAndGlyphs">Cells</text><text x="831.50" y="402.90" font-size="11" fill="#5a5a5a" textLength="33.20" lengthAdjust="spacingAndGlyphs">Editing</text><text x="909.00" y="402.90" font-size="11" fill="#5a5a5a" textLength="37.70" lengthAdjust="spacingAndGlyphs">Analysis</text><path d="M102.4,401.6 V394.7 H109.4" stroke="#444444" stroke-width="1.1" fill="none"/><path d="M105.4,397.9 L110.0,401.9 M105.5,402 H110.4 V397.6" stroke="#444444" stroke-width="1.1" fill="none"/><path d="M263.8,401.6 V394.7 H270.8" stroke="#444444" stroke-width="1.1" fill="none"/><path d="M266.8,397.9 L271.40000000000003,401.9 M266.90000000000003,402 H271.8 V397.6" stroke="#444444" stroke-width="1.1" fill="none"/><path d="M396.4,401.6 V394.7 H403.4" stroke="#444444" stroke-width="1.1" fill="none"/><path d="M399.4,397.9 L404.0,401.9 M399.5,402 H404.4 V397.6" stroke="#444444" stroke-width="1.1" fill="none"/><path d="M501.4,401.6 V394.7 H508.4" stroke="#444444" stroke-width="1.1" fill="none"/><path d="M504.4,397.9 L509.0,401.9 M504.5,402 H509.4 V397.6" stroke="#444444" stroke-width="1.1" fill="none"/><rect x="33.70" y="319.90" width="21.30" height="25.10" fill="#fdf7ee" stroke="#ec9a3c" stroke-width="1.3"/><path d="M37.9,323.4 V320.2 H42.2 A2.3,2.3 0 0 1 46.8,320.2 H51 V323.4 Z" stroke="#6a6a6a" stroke-width="1.2" fill="#f3f2f1" stroke-linejoin="round"/><rect x="47.40" y="328.60" width="13.60" height="17.60" fill="#ffffff" stroke="#6a6a6a" stroke-width="1.2"/><text x="31.20" y="361.60" font-size="11" fill="#454545" textLength="27.10" lengthAdjust="spacingAndGlyphs">Paste</text><path d="M41.5,371.8 L44.4,375 L47.3,371.8" stroke="#444444" stroke-width="1.1" fill="none" stroke-linecap="round" stroke-linejoin="round"/><path d="M75.2,316.2 L81.3,328 M81.6,316.2 L75.5,328" stroke="#444444" stroke-width="1.1" fill="none"/><circle cx="75.1" cy="329.9" r="1.9" stroke="#2b88d8" stroke-width="1.2" fill="none"/><circle cx="81.6" cy="329.9" r="1.9" stroke="#2b88d8" stroke-width="1.2" fill="none"/><path d="M76.6,344 V340.6 H70.6 V354.4 H76.6" stroke="#444444" stroke-width="1.1" fill="none"/><path d="M76.8,344.4 H82.6 L85.8,347.6 V356.2 H76.8 Z M82.6,344.4 V347.6 H85.8 M78.8,351 H83.6 M78.8,353.6 H83.6" stroke="#444444" stroke-width="1.1" fill="#fbfbfb"/><path d="M94,347.6 L96.8,350.6 L99.6,347.6" stroke="#444444" stroke-width="1.1" fill="none" stroke-linecap="round" stroke-linejoin="round"/><path d="M76.8,369.6 L70.6,372.8 L77.2,381 L82.6,375.4 Z" stroke="#e8872a" stroke-width="1.3" fill="#ffffff" stroke-linejoin="round"/><path d="M72.6,375.2 L79.6,378.2 L77.2,381 Z" stroke="#e8872a" stroke-width="0.8" fill="#f3b36e" stroke-linejoin="round"/><path d="M76.8,369.6 L78.6,367.8 L84.4,373.6 L82.6,375.4 Z M80.6,369.8 L84.8,365.6 A1.4,1.4 0 0 1 86.8,367.6 L82.6,371.8" stroke="#3a3a3a" stroke-width="1.2" fill="#ffffff" stroke-linejoin="round"/><rect x="123.70" y="312.90" width="90.20" height="22.80" fill="white" stroke="#c8c6c4" stroke-width="1"/><text x="125.60" y="328.80" font-size="12.2" fill="#3a3a3a" textLength="35.00" lengthAdjust="spacingAndGlyphs">Calibri</text><path d="M205.2,323 L208.2,326.6 L211.2,323" stroke="#444444" stroke-width="1.2" fill="none" stroke-linecap="round" stroke-linejoin="round"/><rect x="216.90" y="312.90" width="50.60" height="22.80" fill="white" stroke="#c8c6c4" stroke-width="1"/><text x="219.60" y="328.80" font-size="12.2" fill="#3a3a3a" textLength="11.00" lengthAdjust="spacingAndGlyphs">11</text><path d="M258.2,323 L261.29999999999995,326.6 L264.4,323" stroke="#444444" stroke-width="1.2" fill="none" stroke-linecap="round" stroke-linejoin="round"/><text x="130.40" y="352.40" font-size="13.6" fill="#3a3a3a" font-weight="bold" textLength="8.40" lengthAdjust="spacingAndGlyphs">B</text><path d="M157.8,342.8 H163.8 M155.6,352.2 H161.6 M161.2,342.8 L158.2,352.2" stroke="#3a3a3a" stroke-width="1.1" fill="none"/><text x="179.20" y="352.20" font-size="13" fill="#3a3a3a" textLength="9.60" lengthAdjust="spacingAndGlyphs">U</text><rect x="179.20" y="354.20" width="9.60" height="1.10" fill="#3a3a3a"/><path d="M200.4,347.4 L203.2,350.6 L206,347.4" stroke="#444444" stroke-width="1.1" fill="none" stroke-linecap="round" stroke-linejoin="round"/><path d="M224.1,353.9 L229.3,340.4 L234.5,353.9 M226.1,348.9 H232.5" stroke="#3a3a3a" stroke-width="1.25" fill="none"/><path d="M234.4,344.6 L236.9,341.4 L239.4,344.6" stroke="#2b88d8" stroke-width="1.2" fill="none" stroke-linecap="round" stroke-linejoin="round"/><path d="M250.7,353.9 L255.1,343.6 L259.5,353.9 M252.4,350 H257.8" stroke="#3a3a3a" stroke-width="1.2" fill="none"/><path d="M259.4,341.6 L261.9,344.8 L264.4,341.6" stroke="#2b88d8" stroke-width="1.2" fill="none" stroke-linecap="round" stroke-linejoin="round"/><path d="M126.6,365.6 H142 V380.4 H126.6 Z" stroke="#6a6a6a" stroke-width="1" fill="none" stroke-dasharray="1,1"/><path d="M134.3,365.6 V380.4 M126.6,373 H142 M126.4,380.6 H142.2" stroke="#444444" stroke-width="1.1" fill="none"/><path d="M150.2,372.2 L153.3,375.6 L156.4,372.2" stroke="#444444" stroke-width="1.1" fill="none" stroke-linecap="round" stroke-linejoin="round"/><path d="M175.4,372.5 L180.8,367.1 L185.6,371.9 L180.3,377 Z M180.8,367.1 V366.4 A1.25,1.25 0 0 1 183.3,366.4 V370.6" stroke="#444444" stroke-width="1.2" fill="white" stroke-linejoin="round"/><path d="M185.2,369.2 C186.8,369.6 187.4,371.4 187.2,375.2" stroke="#2b88d8" stroke-width="1.5" fill="none"/><rect x="172.90" y="378.20" width="16.90" height="3.50" fill="#fff500"/><path d="M197.2,372.2 L200.3,375.6 L203.4,372.2" stroke="#444444" stroke-width="1.1" fill="none" stroke-linecap="round" stroke-linejoin="round"/><path d="M217.8,376.2 L222.05,366.2 L226.3,376.2 M219.4,372.4 H224.7" stroke="#3a3a3a" stroke-width="1.2" fill="none"/><rect x="213.90" y="378.20" width="16.20" height="3.50" fill="#ee1111"/><path d="M237.9,372.2 L241.05,375.6 L244.2,372.2" stroke="#444444" stroke-width="1.1" fill="none" stroke-linecap="round" stroke-linejoin="round"/><path d="M288.40,316 H303.40 M291.25,320.2 H300.55 M288.40,324.5 H303.40" stroke="#555" stroke-width="1.2" fill="none"/><path d="M313.50,319.2 H328.20 M316.29,323.3 H325.41 M313.50,327.4 H328.20" stroke="#555" stroke-width="1.2" fill="none"/><rect x="334.30" y="312.30" width="23.40" height="23.60" fill="#c8c6c4" stroke="#a8a6a4" stroke-width="1"/><path d="M338.40,323.3 H353.10 M341.19,327.4 H350.31 M338.40,331.5 H353.10" stroke="#2a2a2a" stroke-width="1.3" fill="none"/><text x="365.60" y="323.60" font-size="11" fill="#555" textLength="12.60" lengthAdjust="spacingAndGlyphs">ab</text><text x="365.60" y="331.00" font-size="11" fill="#555" textLength="5.60" lengthAdjust="spacingAndGlyphs">c</text><path d="M379.6,323.6 C381.4,326.6 379.6,329.6 373.6,329.6 M376,327.2 L373.4,329.6 L376,332" stroke="#2b88d8" stroke-width="1.2" fill="none"/><path d="M288.40,342.1 H303.40 M288.40,346.2 H297.70 M288.40,350.3 H303.40 M288.40,354.4 H297.70" stroke="#555" stroke-width="1.2" fill="none"/><path d="M313.50,342.1 H328.20 M316.29,346.2 H325.41 M313.50,350.3 H328.20 M316.29,354.4 H325.41" stroke="#555" stroke-width="1.2" fill="none"/><path d="M338.40,342.1 H353.10 M343.99,346.2 H353.10 M338.40,350.3 H353.10 M343.99,354.4 H353.10" stroke="#555" stroke-width="1.2" fill="none"/><rect x="363.60" y="340.70" width="15.00" height="14.60" fill="none" stroke="#555" stroke-width="1.1"/><rect x="364.60" y="343.60" width="13.00" height="8.80" fill="#ffffff" stroke="#2b88d8" stroke-width="1.2"/><path d="M367,348 H375.2 M368.8,346.2 L367,348 L368.8,349.8 M373.4,346.2 L375.2,348 L373.4,349.8" stroke="#2b88d8" stroke-width="1.1" fill="none"/><path d="M371.1,340.7 V343.2 M371.1,352.8 V355.3" stroke="#555" stroke-width="1" fill="none"/><path d="M387.2,347.6 L390.1,350.8 L393,347.6" stroke="#444444" stroke-width="1.1" fill="none" stroke-linecap="round" stroke-linejoin="round"/><path d="M288.4,366.5 H303.4 M297.2,370.9 H303.4 M297.2,375 H303.4 M288.4,379.3 H303.4" stroke="#555" stroke-width="1.2" fill="none"/><path d="M288.8,373 H295.4 M291.2,370.6 L288.8,373 L291.2,375.4" stroke="#2b88d8" stroke-width="1.2" fill="none"/><path d="M313.5,366.5 H328.2 M322.2,370.9 H328.2 M322.2,375 H328.2 M313.5,379.3 H328.2" stroke="#555" stroke-width="1.2" fill="none"/><path d="M313.8,373 H320.6 M318.2,370.6 L320.6,373 L318.2,375.4" stroke="#2b88d8" stroke-width="1.2" fill="none"/><text x="341.60" y="376.40" font-size="11.5" fill="#555" textLength="12.60" lengthAdjust="spacingAndGlyphs" transform="rotate(-45 347.5 371)">ab</text><path d="M349.2,380.6 L359.8,370 M355.6,370 H359.8 V374.2" stroke="#2b88d8" stroke-width="1.2" fill="none"/><path d="M365,372.6 L368.0,375.8 L371,372.6" stroke="#444444" stroke-width="1.1" fill="none" stroke-linecap="round" stroke-linejoin="round"/><rect x="416.90" y="312.50" width="88.60" height="22.80" fill="white" stroke="#c8c6c4" stroke-width="1"/><text x="419.30" y="328.50" font-size="11.9" fill="#3a3a3a" textLength="41.50" lengthAdjust="spacingAndGlyphs">General</text><path d="M496.3,323 L499.3,326.6 L502.3,323" stroke="#444444" stroke-width="1.2" fill="none" stroke-linecap="round" stroke-linejoin="round"/><text x="423.20" y="355.20" font-size="17.5" fill="#3a3a3a" textLength="9.40" lengthAdjust="spacingAndGlyphs" stroke="#f3f2f1" stroke-width="0.2">$</text><path d="M443.6,347.2 L446.8,350.6 L450,347.2" stroke="#444444" stroke-width="1.1" fill="none" stroke-linecap="round" stroke-linejoin="round"/><text x="460.60" y="356.40" font-size="17.5" fill="#3a3a3a" textLength="15.80" lengthAdjust="spacingAndGlyphs" stroke="#f3f2f1" stroke-width="0.2">%</text><circle cx="495.2" cy="346.4" r="3.4" fill="#3a3a3a"/><path d="M497.6,347 C498.6,351.4 496,354.2 491,355.4 L490.8,354.2 C493.6,353 495,351.2 494.8,348.6 Z" stroke="#3a3a3a" stroke-width="0.6" fill="#3a3a3a"/><text x="430.50" y="372.50" font-size="8.6" fill="#555" textLength="5.40" lengthAdjust="spacingAndGlyphs">0</text><text x="422.20" y="380.90" font-size="8.6" fill="#555" textLength="13.80" lengthAdjust="spacingAndGlyphs">.00</text><path d="M420.4,370 H429.4 M423,367.4 L420.4,370 L423,372.6" stroke="#2b88d8" stroke-width="1.2" fill="none"/><text x="447.20" y="372.50" font-size="8.6" fill="#555" textLength="13.60" lengthAdjust="spacingAndGlyphs">.00</text><text x="452.80" y="380.90" font-size="8.6" fill="#555" textLength="8.00" lengthAdjust="spacingAndGlyphs">.0</text><path d="M445.2,377.4 H453.8 M451.2,374.8 L453.8,377.4 L451.2,380" stroke="#2b88d8" stroke-width="1.2" fill="none"/><rect x="525.80" y="315.30" width="15.60" height="14.00" fill="none" stroke="#555" stroke-width="1.1"/><path d="M530.83,314.8 V329.8 M536.37,314.8 V329.8 M525.3,319.80 H541.9 M525.3,324.80 H541.9" stroke="#777" stroke-width="0.9" fill="none"/><rect x="527.00" y="316.00" width="9.00" height="3.60" fill="#e8383d"/><rect x="527.00" y="320.40" width="5.00" height="3.60" fill="#2b88d8"/><rect x="527.00" y="324.80" width="9.00" height="3.60" fill="#e8383d"/><text x="545.50" y="326.90" font-size="12.5" fill="#3a3a3a" textLength="127.60" lengthAdjust="spacingAndGlyphs">Conditional Formatting</text><path d="M677.8,321.2 L680.5,324 L683.2,321.2" stroke="#444444" stroke-width="1.1" fill="none" stroke-linecap="round" stroke-linejoin="round"/><rect x="525.80" y="339.50" width="15.60" height="14.00" fill="none" stroke="#555" stroke-width="1.1"/><path d="M530.83,339 V354 M536.37,339 V354 M525.3,344.00 H541.9 M525.3,349.00 H541.9" stroke="#777" stroke-width="0.9" fill="none"/><rect x="530.60" y="343.40" width="10.80" height="10.00" fill="#8cc4ee" stroke="#1f78c8" stroke-width="1"/><path d="M533.6,351.8 L541.2,344.2" stroke="#333" stroke-width="2.6" fill="none" stroke-linecap="round"/><path d="M534.2,351.2 L540.6,344.8" stroke="#ffffff" stroke-width="0.8" fill="none"/><path d="M529,354 C529.6,351.6 531,350.4 533.2,350.2 L535,352 C534.6,354 532.4,354.4 529,354 Z" stroke="#2b88d8" stroke-width="0.8" fill="#2b88d8"/><text x="545.50" y="351.10" font-size="12.2" fill="#3a3a3a" textLength="86.20" lengthAdjust="spacingAndGlyphs">Format as Table</text><path d="M636,345.2 L639.0,348 L642,345.2" stroke="#444444" stroke-width="1.1" fill="none" stroke-linecap="round" stroke-linejoin="round"/><rect x="525.80" y="363.50" width="15.60" height="14.00" fill="none" stroke="#555" stroke-width="1.1"/><rect x="528.20" y="365.80" width="11.00" height="9.40" fill="#8cc4ee" stroke="#1f78c8" stroke-width="1.1"/><path d="M532.6,375.6 L540.6,367.6" stroke="#333" stroke-width="2.6" fill="none" stroke-linecap="round"/><path d="M533.2,375 L540,368.2" stroke="#ffffff" stroke-width="0.8" fill="none"/><path d="M528,377.8 C528.6,375.4 530,374.2 532.2,374 L534,375.8 C533.6,377.8 531.4,378.2 528,377.8 Z" stroke="#2b88d8" stroke-width="0.8" fill="#2b88d8"/><text x="545.50" y="375.20" font-size="12" fill="#3a3a3a" textLength="55.80" lengthAdjust="spacingAndGlyphs">Cell Styles</text><path d="M605,369.4 L607.9,372.2 L610.8,369.4" stroke="#444444" stroke-width="1.1" fill="none" stroke-linecap="round" stroke-linejoin="round"/><rect x="713.30" y="315.50" width="15.20" height="13.40" fill="none" stroke="#555" stroke-width="1.1"/><path d="M718.20,315 V329.4 M723.60,315 V329.4 M712.8,319.80 H729.0 M712.8,324.60 H729.0" stroke="#777" stroke-width="0.9" fill="none"/><rect x="719.20" y="320.00" width="9.60" height="4.40" fill="#7ab6e6" stroke="#2b88d8" stroke-width="1"/><path d="M713.6,322.2 H721.6 M716,319.8 L713.6,322.2 L716,324.6" stroke="#2b88d8" stroke-width="1.3" fill="none"/><text x="732.60" y="326.90" font-size="12" fill="#3a3a3a" textLength="29.40" lengthAdjust="spacingAndGlyphs">Insert</text><path d="M774.2,320.8 L777.1,323.8 L780,320.8" stroke="#444444" stroke-width="1.1" fill="none" stroke-linecap="round" stroke-linejoin="round"/><rect x="713.30" y="339.80" width="15.20" height="13.20" fill="none" stroke="#555" stroke-width="1.1"/><path d="M718.20,339.3 V353.5 M723.60,339.3 V353.5 M712.8,344.03 H729.0 M712.8,348.77 H729.0" stroke="#777" stroke-width="0.9" fill="none"/><rect x="716.20" y="344.00" width="5.60" height="4.60" fill="#7ab6e6" stroke="#2b88d8" stroke-width="1.1"/><path d="M724.2,343.6 L728.6,348.6 M728.6,343.6 L724.2,348.6" stroke="#e8383d" stroke-width="1.2" fill="none"/><text x="732.60" y="350.90" font-size="12.4" fill="#3a3a3a" textLength="36.20" lengthAdjust="spacingAndGlyphs">Delete</text><path d="M781,344.8 L783.9,347.8 L786.8,344.8" stroke="#444444" stroke-width="1.1" fill="none" stroke-linecap="round" stroke-linejoin="round"/><rect x="713.30" y="364.30" width="15.20" height="14.00" fill="none" stroke="#555" stroke-width="1.1"/><path d="M718.20,363.8 V378.8 M723.60,363.8 V378.8 M712.8,368.80 H729.0 M712.8,373.80 H729.0" stroke="#777" stroke-width="0.9" fill="none"/><rect x="716.40" y="367.60" width="9.40" height="7.40" fill="#7ab6e6" stroke="#2b88d8" stroke-width="1"/><path d="M714.6,362.4 H727 M714.6,361.2 V363.6 M727,361.2 V363.6" stroke="#2b88d8" stroke-width="1" fill="none"/><text x="732.60" y="375.20" font-size="12.4" fill="#3a3a3a" textLength="39.20" lengthAdjust="spacingAndGlyphs">Format</text><path d="M776,369.6 L778.9,372.4 L781.8,369.6" stroke="#444444" stroke-width="1.1" fill="none" stroke-linecap="round" stroke-linejoin="round"/><path d="M828.2,316.6 V315.3 H815.2 L821.8,322.2 L815.2,329.1 H828.2 V327.8" stroke="#444" stroke-width="1.3" fill="none" stroke-linejoin="miter"/><path d="M837.3,321 L840.0999999999999,324.1 L842.9,321" stroke="#444444" stroke-width="1.1" fill="none" stroke-linecap="round" stroke-linejoin="round"/><text x="853.10" y="320.80" font-size="8.6" fill="#2b88d8" font-weight="bold" textLength="6.60" lengthAdjust="spacingAndGlyphs">A</text><text x="853.10" y="330.30" font-size="8.6" fill="#444" font-weight="bold" textLength="6.60" lengthAdjust="spacingAndGlyphs">Z</text><path d="M860.8,318.4 H869.8 L866.4,322.4 V326.6 H864.2 V322.4 Z" stroke="#555" stroke-width="1.3" fill="#f3f2f1" stroke-linejoin="round"/><path d="M874.6,321 L877.6,324.1 L880.6,321" stroke="#444444" stroke-width="1.1" fill="none" stroke-linecap="round" stroke-linejoin="round"/><rect x="813.60" y="339.50" width="16.00" height="13.80" fill="#fbfbfb" stroke="#555" stroke-width="1.2"/><path d="M813.6,341.6 H829.6" stroke="#555" stroke-width="1.2" fill="none"/><path d="M821.6,343.6 V350.6 M819,348.2 L821.6,350.8 L824.2,348.2" stroke="#2b88d8" stroke-width="1.3" fill="none"/><path d="M834.6,345 L837.75,348.2 L840.9,345" stroke="#444444" stroke-width="1.1" fill="none" stroke-linecap="round" stroke-linejoin="round"/><circle cx="864" cy="343.8" r="5.7" stroke="#444" stroke-width="1.2" fill="#fbfbfb"/><path d="M854.4,353.4 L860.1,347.8" stroke="#444" stroke-width="1.3" fill="none"/><path d="M874.6,345 L877.6,348.2 L880.6,345" stroke="#444444" stroke-width="1.1" fill="none" stroke-linecap="round" stroke-linejoin="round"/><path d="M813.8,371.6 L822,363.4 L828.8,369.8 L820.4,378 Z" stroke="#a23bba" stroke-width="1.3" fill="#ffffff" stroke-linejoin="round"/><path d="M813.8,371.6 L817.4,368 L824.2,374.4 L820.4,378 Z" stroke="#a23bba" stroke-width="1.2" fill="#d9a8e4" stroke-linejoin="round"/><path d="M834.6,369.2 L837.75,372.4 L840.9,369.2" stroke="#444444" stroke-width="1.1" fill="none" stroke-linecap="round" stroke-linejoin="round"/><rect x="911.40" y="314.40" width="33.00" height="32.00" fill="#fbfbfb" stroke="#3f3f3f" stroke-width="1.3"/><rect x="912.00" y="315.00" width="31.80" height="4.40" fill="#a8a8a8"/><path d="M911.4,319.6 H944.4 M922.4,319.6 V346.4 M933.4,319.6 V346.4 M911.4,328.4 H944.4 M911.4,337.4 H944.4" stroke="#888" stroke-width="1" fill="none"/><circle cx="926.9" cy="327.8" r="10.2" stroke="#3f3f3f" stroke-width="1.4" fill="#f8f8f8"/><rect x="920.80" y="327.40" width="3.00" height="5.40" fill="#b8b8b8"/><rect x="924.60" y="322.20" width="3.20" height="10.60" fill="#ffffff" stroke="#666" stroke-width="0.9"/><rect x="928.40" y="324.40" width="3.40" height="8.40" fill="#2b88d8"/><path d="M933.8,335 L944.2,346" stroke="#3f3f3f" stroke-width="1.4" fill="none"/><text x="906.70" y="361.40" font-size="12.2" fill="#454545" textLength="42.30" lengthAdjust="spacingAndGlyphs">Analyze</text><text x="915.00" y="378.00" font-size="12.2" fill="#454545" textLength="25.80" lengthAdjust="spacingAndGlyphs">Data</text><path d="M987.2,398 H993.6 M993.9,393.6 V402.2 L997.4,399.8 H1002.6 V402 M993.9,393.6 L997.4,396.2 H1002.6 V394 M1002.6,394 V402" stroke="#444444" stroke-width="1.1" fill="none" stroke-linejoin="round"/><rect x="15.00" y="406.20" width="996.00" height="1.20" fill="#dadada"/></g></svg></body></html>
